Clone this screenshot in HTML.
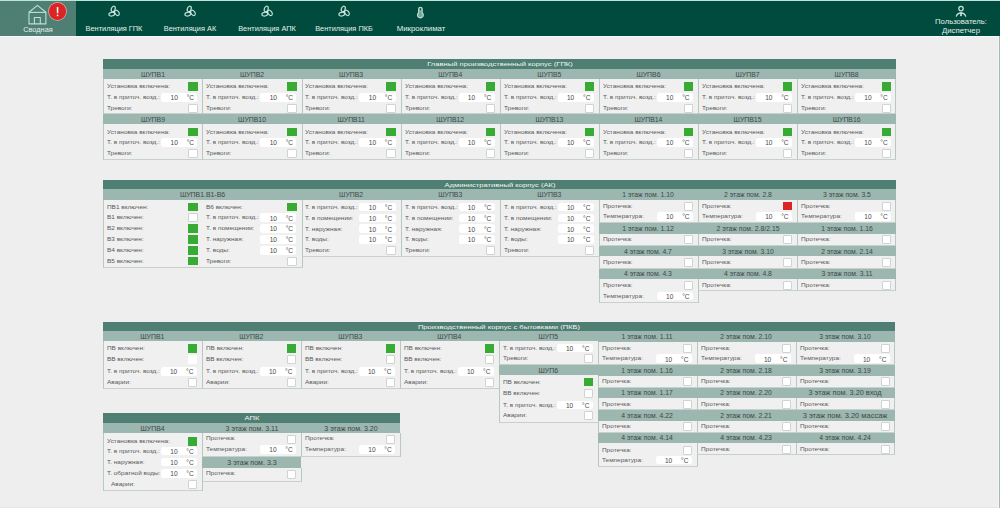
<!DOCTYPE html>
<html><head><meta charset="utf-8"><style>
html,body{margin:0;padding:0;}
body{width:1000px;height:508px;overflow:hidden;background:#eeeeee;position:relative;font-family:"Liberation Sans", sans-serif;}
body>div,body>svg{position:absolute;}
.t{white-space:nowrap;}
</style></head><body>
<div style="left:0.00px;top:0.00px;width:1000.00px;height:36.00px;background:#014b3e;"></div>
<div style="left:0.00px;top:0.00px;width:1000.00px;height:1.00px;background:#bfe3d8;"></div>
<div style="left:0.00px;top:1.00px;width:76.00px;height:35.00px;background:#4f7f73;"></div>
<div style="left:0.00px;top:36.00px;width:1000.00px;height:1.00px;background:#f8faf9;"></div>
<div style="left:998.00px;top:37.00px;width:1.00px;height:471.00px;background:#f5f7f6;"></div>
<div style="left:999.00px;top:36.00px;width:1.00px;height:472.00px;background:#a9b7b3;"></div>
<div style="left:0.00px;top:507.00px;width:998.00px;height:1.00px;background:#e6e7e6;"></div>
<svg style="left:0;top:0" width="80" height="36" viewBox="0 0 80 36">
<g fill="none" stroke="#bfe0d6" stroke-width="1.1" stroke-linejoin="round">
<path d="M29 12.2 L37.4 5.4 L45.9 12.2 L45.9 23.9 L29 23.9 Z"/>
<path d="M29 12.4 L45.9 12.4"/>
<path d="M34.4 23.9 L34.4 17.5 L40.3 17.5 L40.3 23.9"/>
</g>
<circle cx="57.5" cy="11.4" r="9.3" fill="#e4b0ac"/>
<circle cx="57.5" cy="11.4" r="8.6" fill="#d92525"/>
<rect x="56.8" y="6.9" width="1.5" height="6.4" rx="0.6" fill="#fff"/>
<rect x="56.8" y="14.6" width="1.5" height="1.6" rx="0.5" fill="#fff"/>
</svg>
<div class="t" style="left:-112.40px;top:26.18px;width:300px;text-align:center;font-size:6.7px;line-height:8.04px;color:#e4efeb;transform:scaleX(1.1);">Сводная</div>
<svg style="left:106.00px;top:4.30px" width="16" height="16" viewBox="-8 -8 16 16"><g fill="none" stroke="#bfe0d6" stroke-width="1.2"><ellipse cx="0" cy="0" rx="2.9" ry="1.85" transform="rotate(-104) translate(3.1,0) rotate(35)"/><ellipse cx="0" cy="0" rx="2.9" ry="1.85" transform="rotate(16) translate(3.1,0) rotate(35)"/><ellipse cx="0" cy="0" rx="2.9" ry="1.85" transform="rotate(136) translate(3.1,0) rotate(35)"/></g><circle cx="0" cy="0" r="0.8" fill="#dff" /></svg>
<div class="t" style="left:-36.00px;top:25.38px;width:300px;text-align:center;font-size:6.7px;line-height:8.04px;color:#e4efeb;transform:scaleX(1.1);">Вентиляция ГПК</div>
<svg style="left:182.40px;top:4.30px" width="16" height="16" viewBox="-8 -8 16 16"><g fill="none" stroke="#bfe0d6" stroke-width="1.2"><ellipse cx="0" cy="0" rx="2.9" ry="1.85" transform="rotate(-104) translate(3.1,0) rotate(35)"/><ellipse cx="0" cy="0" rx="2.9" ry="1.85" transform="rotate(16) translate(3.1,0) rotate(35)"/><ellipse cx="0" cy="0" rx="2.9" ry="1.85" transform="rotate(136) translate(3.1,0) rotate(35)"/></g><circle cx="0" cy="0" r="0.8" fill="#dff" /></svg>
<div class="t" style="left:40.40px;top:25.38px;width:300px;text-align:center;font-size:6.7px;line-height:8.04px;color:#e4efeb;transform:scaleX(1.1);">Вентиляция АК</div>
<svg style="left:259.30px;top:4.30px" width="16" height="16" viewBox="-8 -8 16 16"><g fill="none" stroke="#bfe0d6" stroke-width="1.2"><ellipse cx="0" cy="0" rx="2.9" ry="1.85" transform="rotate(-104) translate(3.1,0) rotate(35)"/><ellipse cx="0" cy="0" rx="2.9" ry="1.85" transform="rotate(16) translate(3.1,0) rotate(35)"/><ellipse cx="0" cy="0" rx="2.9" ry="1.85" transform="rotate(136) translate(3.1,0) rotate(35)"/></g><circle cx="0" cy="0" r="0.8" fill="#dff" /></svg>
<div class="t" style="left:117.30px;top:25.38px;width:300px;text-align:center;font-size:6.7px;line-height:8.04px;color:#e4efeb;transform:scaleX(1.1);">Вентиляция АПК</div>
<svg style="left:336.00px;top:4.30px" width="16" height="16" viewBox="-8 -8 16 16"><g fill="none" stroke="#bfe0d6" stroke-width="1.2"><ellipse cx="0" cy="0" rx="2.9" ry="1.85" transform="rotate(-104) translate(3.1,0) rotate(35)"/><ellipse cx="0" cy="0" rx="2.9" ry="1.85" transform="rotate(16) translate(3.1,0) rotate(35)"/><ellipse cx="0" cy="0" rx="2.9" ry="1.85" transform="rotate(136) translate(3.1,0) rotate(35)"/></g><circle cx="0" cy="0" r="0.8" fill="#dff" /></svg>
<div class="t" style="left:194.00px;top:25.38px;width:300px;text-align:center;font-size:6.7px;line-height:8.04px;color:#e4efeb;transform:scaleX(1.1);">Вентиляция ПКБ</div>
<svg style="left:410px;top:2px" width="20" height="20" viewBox="0 0 20 20">
<path d="M8.65 10.7 L8.65 6.95 A1.75 1.75 0 0 1 12.15 6.95 L12.15 10.7 A2.9 2.9 0 1 1 8.65 10.7 Z" fill="#74a898" stroke="#bfe0d6" stroke-width="1.1"/>
<ellipse cx="10.4" cy="7.2" rx="0.7" ry="1.05" fill="#0d4a3e"/>
</svg>
<div class="t" style="left:270.50px;top:25.38px;width:300px;text-align:center;font-size:6.7px;line-height:8.04px;color:#e4efeb;transform:scaleX(1.17);">Микроклимат</div>
<svg style="left:950px;top:2px" width="22" height="18" viewBox="0 0 22 18">
<g fill="none" stroke="#bfe0d6" stroke-width="1.3">
<circle cx="11" cy="6.6" r="2.2"/>
<path d="M6.2 14.6 A5 5 0 0 1 15.8 14.6"/>
</g>
<path d="M10.3 10 L11.7 10 L11.9 13.6 L11 14.6 L10.1 13.6 Z" fill="#bfe0d6"/>
</svg>
<div class="t" style="left:811.20px;top:18.18px;width:300px;text-align:center;font-size:6.7px;line-height:8.04px;color:#e4efeb;transform:scaleX(1.145);">Пользователь:</div>
<div class="t" style="left:810.80px;top:26.78px;width:300px;text-align:center;font-size:6.7px;line-height:8.04px;color:#e4efeb;transform:scaleX(1.16);">Диспетчер</div>
<div style="left:103.00px;top:59.00px;width:793.00px;height:10.00px;background:#4f7e72;"></div>
<div class="t" style="left:349.80px;top:60.38px;width:300px;text-align:center;font-size:6.2px;line-height:7.44px;color:#f2f7f5;transform:scaleX(1.23);">Главный производственный корпус (ГПК)</div>
<div style="left:103.00px;top:69.00px;width:99.00px;height:10.00px;background:#9cb6b0;"></div>
<div class="t" style="left:2.95px;top:71.31px;width:300px;text-align:center;font-size:6.9px;line-height:8.28px;color:#3e4846;">ШУПВ1</div>
<div style="left:103.00px;top:79.00px;width:101.00px;height:35.00px;background:#f0f0f0;box-sizing:border-box;border:1px solid #b7c7c2;border-bottom-color:#c6d1ce;border-top:none;"></div>
<div class="t" style="left:107.20px;top:83.32px;transform-origin:0 50%;font-size:5.8px;line-height:6.96px;color:#595959;transform:scaleX(1.11);">Установка включена:</div>
<div style="left:188.20px;top:82.30px;width:9.50px;height:8.50px;background:#38ab34;"></div>
<div class="t" style="left:107.20px;top:94.02px;transform-origin:0 50%;font-size:5.8px;line-height:6.96px;color:#595959;transform:scaleX(1.11);">Т. в приточ. возд.:</div>
<div style="left:161.20px;top:92.90px;width:36.20px;height:8.70px;background:#ffffff;border-radius:2.5px;"></div>
<div class="t" style="left:24.20px;top:94.16px;width:300px;text-align:center;font-size:6.56px;line-height:7.87px;color:#4a4a4a;">10</div>
<div class="t" style="left:-106.00px;top:94.16px;width:300px;text-align:right;transform-origin:100% 50%;font-size:6.56px;line-height:7.87px;color:#4a4a4a;">°C</div>
<div class="t" style="left:107.20px;top:104.72px;transform-origin:0 50%;font-size:5.8px;line-height:6.96px;color:#595959;transform:scaleX(1.11);">Тревоги:</div>
<div style="left:188.20px;top:103.70px;width:9.50px;height:9.00px;background:#ffffff;box-sizing:border-box;border:1px solid #cfd3d2;border-radius:1px;"></div>
<div style="left:202.00px;top:69.00px;width:100.00px;height:10.00px;background:#9cb6b0;"></div>
<div class="t" style="left:102.05px;top:71.31px;width:300px;text-align:center;font-size:6.9px;line-height:8.28px;color:#3e4846;">ШУПВ2</div>
<div style="left:202.00px;top:79.00px;width:101.00px;height:35.00px;background:#f0f0f0;box-sizing:border-box;border:1px solid #b7c7c2;border-bottom-color:#c6d1ce;border-top:none;"></div>
<div class="t" style="left:206.30px;top:83.32px;transform-origin:0 50%;font-size:5.8px;line-height:6.96px;color:#595959;transform:scaleX(1.11);">Установка включена:</div>
<div style="left:287.30px;top:82.30px;width:9.50px;height:8.50px;background:#38ab34;"></div>
<div class="t" style="left:206.30px;top:94.02px;transform-origin:0 50%;font-size:5.8px;line-height:6.96px;color:#595959;transform:scaleX(1.11);">Т. в приточ. возд.:</div>
<div style="left:260.30px;top:92.90px;width:36.20px;height:8.70px;background:#ffffff;border-radius:2.5px;"></div>
<div class="t" style="left:123.30px;top:94.16px;width:300px;text-align:center;font-size:6.56px;line-height:7.87px;color:#4a4a4a;">10</div>
<div class="t" style="left:-6.90px;top:94.16px;width:300px;text-align:right;transform-origin:100% 50%;font-size:6.56px;line-height:7.87px;color:#4a4a4a;">°C</div>
<div class="t" style="left:206.30px;top:104.72px;transform-origin:0 50%;font-size:5.8px;line-height:6.96px;color:#595959;transform:scaleX(1.11);">Тревоги:</div>
<div style="left:287.30px;top:103.70px;width:9.50px;height:9.00px;background:#ffffff;box-sizing:border-box;border:1px solid #cfd3d2;border-radius:1px;"></div>
<div style="left:302.00px;top:69.00px;width:99.00px;height:10.00px;background:#9cb6b0;"></div>
<div class="t" style="left:201.15px;top:71.31px;width:300px;text-align:center;font-size:6.9px;line-height:8.28px;color:#3e4846;">ШУПВ3</div>
<div style="left:302.00px;top:79.00px;width:100.00px;height:35.00px;background:#f0f0f0;box-sizing:border-box;border:1px solid #b7c7c2;border-bottom-color:#c6d1ce;border-top:none;"></div>
<div class="t" style="left:305.40px;top:83.32px;transform-origin:0 50%;font-size:5.8px;line-height:6.96px;color:#595959;transform:scaleX(1.11);">Установка включена:</div>
<div style="left:386.40px;top:82.30px;width:9.50px;height:8.50px;background:#38ab34;"></div>
<div class="t" style="left:305.40px;top:94.02px;transform-origin:0 50%;font-size:5.8px;line-height:6.96px;color:#595959;transform:scaleX(1.11);">Т. в приточ. возд.:</div>
<div style="left:359.40px;top:92.90px;width:36.20px;height:8.70px;background:#ffffff;border-radius:2.5px;"></div>
<div class="t" style="left:222.40px;top:94.16px;width:300px;text-align:center;font-size:6.56px;line-height:7.87px;color:#4a4a4a;">10</div>
<div class="t" style="left:92.20px;top:94.16px;width:300px;text-align:right;transform-origin:100% 50%;font-size:6.56px;line-height:7.87px;color:#4a4a4a;">°C</div>
<div class="t" style="left:305.40px;top:104.72px;transform-origin:0 50%;font-size:5.8px;line-height:6.96px;color:#595959;transform:scaleX(1.11);">Тревоги:</div>
<div style="left:386.40px;top:103.70px;width:9.50px;height:9.00px;background:#ffffff;box-sizing:border-box;border:1px solid #cfd3d2;border-radius:1px;"></div>
<div style="left:401.00px;top:69.00px;width:99.00px;height:10.00px;background:#9cb6b0;"></div>
<div class="t" style="left:300.25px;top:71.31px;width:300px;text-align:center;font-size:6.9px;line-height:8.28px;color:#3e4846;">ШУПВ4</div>
<div style="left:401.00px;top:79.00px;width:100.00px;height:35.00px;background:#f0f0f0;box-sizing:border-box;border:1px solid #b7c7c2;border-bottom-color:#c6d1ce;border-top:none;"></div>
<div class="t" style="left:404.50px;top:83.32px;transform-origin:0 50%;font-size:5.8px;line-height:6.96px;color:#595959;transform:scaleX(1.11);">Установка включена:</div>
<div style="left:485.50px;top:82.30px;width:9.50px;height:8.50px;background:#38ab34;"></div>
<div class="t" style="left:404.50px;top:94.02px;transform-origin:0 50%;font-size:5.8px;line-height:6.96px;color:#595959;transform:scaleX(1.11);">Т. в приточ. возд.:</div>
<div style="left:458.50px;top:92.90px;width:36.20px;height:8.70px;background:#ffffff;border-radius:2.5px;"></div>
<div class="t" style="left:321.50px;top:94.16px;width:300px;text-align:center;font-size:6.56px;line-height:7.87px;color:#4a4a4a;">10</div>
<div class="t" style="left:191.30px;top:94.16px;width:300px;text-align:right;transform-origin:100% 50%;font-size:6.56px;line-height:7.87px;color:#4a4a4a;">°C</div>
<div class="t" style="left:404.50px;top:104.72px;transform-origin:0 50%;font-size:5.8px;line-height:6.96px;color:#595959;transform:scaleX(1.11);">Тревоги:</div>
<div style="left:485.50px;top:103.70px;width:9.50px;height:9.00px;background:#ffffff;box-sizing:border-box;border:1px solid #cfd3d2;border-radius:1px;"></div>
<div style="left:500.00px;top:69.00px;width:99.00px;height:10.00px;background:#9cb6b0;"></div>
<div class="t" style="left:399.35px;top:71.31px;width:300px;text-align:center;font-size:6.9px;line-height:8.28px;color:#3e4846;">ШУПВ5</div>
<div style="left:500.00px;top:79.00px;width:100.00px;height:35.00px;background:#f0f0f0;box-sizing:border-box;border:1px solid #b7c7c2;border-bottom-color:#c6d1ce;border-top:none;"></div>
<div class="t" style="left:503.60px;top:83.32px;transform-origin:0 50%;font-size:5.8px;line-height:6.96px;color:#595959;transform:scaleX(1.11);">Установка включена:</div>
<div style="left:584.60px;top:82.30px;width:9.50px;height:8.50px;background:#38ab34;"></div>
<div class="t" style="left:503.60px;top:94.02px;transform-origin:0 50%;font-size:5.8px;line-height:6.96px;color:#595959;transform:scaleX(1.11);">Т. в приточ. возд.:</div>
<div style="left:557.60px;top:92.90px;width:36.20px;height:8.70px;background:#ffffff;border-radius:2.5px;"></div>
<div class="t" style="left:420.60px;top:94.16px;width:300px;text-align:center;font-size:6.56px;line-height:7.87px;color:#4a4a4a;">10</div>
<div class="t" style="left:290.40px;top:94.16px;width:300px;text-align:right;transform-origin:100% 50%;font-size:6.56px;line-height:7.87px;color:#4a4a4a;">°C</div>
<div class="t" style="left:503.60px;top:104.72px;transform-origin:0 50%;font-size:5.8px;line-height:6.96px;color:#595959;transform:scaleX(1.11);">Тревоги:</div>
<div style="left:584.60px;top:103.70px;width:9.50px;height:9.00px;background:#ffffff;box-sizing:border-box;border:1px solid #cfd3d2;border-radius:1px;"></div>
<div style="left:599.00px;top:69.00px;width:99.00px;height:10.00px;background:#9cb6b0;"></div>
<div class="t" style="left:498.45px;top:71.31px;width:300px;text-align:center;font-size:6.9px;line-height:8.28px;color:#3e4846;">ШУПВ6</div>
<div style="left:599.00px;top:79.00px;width:100.00px;height:35.00px;background:#f0f0f0;box-sizing:border-box;border:1px solid #b7c7c2;border-bottom-color:#c6d1ce;border-top:none;"></div>
<div class="t" style="left:602.70px;top:83.32px;transform-origin:0 50%;font-size:5.8px;line-height:6.96px;color:#595959;transform:scaleX(1.11);">Установка включена:</div>
<div style="left:683.70px;top:82.30px;width:9.50px;height:8.50px;background:#38ab34;"></div>
<div class="t" style="left:602.70px;top:94.02px;transform-origin:0 50%;font-size:5.8px;line-height:6.96px;color:#595959;transform:scaleX(1.11);">Т. в приточ. возд.:</div>
<div style="left:656.70px;top:92.90px;width:36.20px;height:8.70px;background:#ffffff;border-radius:2.5px;"></div>
<div class="t" style="left:519.70px;top:94.16px;width:300px;text-align:center;font-size:6.56px;line-height:7.87px;color:#4a4a4a;">10</div>
<div class="t" style="left:389.50px;top:94.16px;width:300px;text-align:right;transform-origin:100% 50%;font-size:6.56px;line-height:7.87px;color:#4a4a4a;">°C</div>
<div class="t" style="left:602.70px;top:104.72px;transform-origin:0 50%;font-size:5.8px;line-height:6.96px;color:#595959;transform:scaleX(1.11);">Тревоги:</div>
<div style="left:683.70px;top:103.70px;width:9.50px;height:9.00px;background:#ffffff;box-sizing:border-box;border:1px solid #cfd3d2;border-radius:1px;"></div>
<div style="left:698.00px;top:69.00px;width:99.00px;height:10.00px;background:#9cb6b0;"></div>
<div class="t" style="left:597.55px;top:71.31px;width:300px;text-align:center;font-size:6.9px;line-height:8.28px;color:#3e4846;">ШУПВ7</div>
<div style="left:698.00px;top:79.00px;width:100.00px;height:35.00px;background:#f0f0f0;box-sizing:border-box;border:1px solid #b7c7c2;border-bottom-color:#c6d1ce;border-top:none;"></div>
<div class="t" style="left:701.80px;top:83.32px;transform-origin:0 50%;font-size:5.8px;line-height:6.96px;color:#595959;transform:scaleX(1.11);">Установка включена:</div>
<div style="left:782.80px;top:82.30px;width:9.50px;height:8.50px;background:#38ab34;"></div>
<div class="t" style="left:701.80px;top:94.02px;transform-origin:0 50%;font-size:5.8px;line-height:6.96px;color:#595959;transform:scaleX(1.11);">Т. в приточ. возд.:</div>
<div style="left:755.80px;top:92.90px;width:36.20px;height:8.70px;background:#ffffff;border-radius:2.5px;"></div>
<div class="t" style="left:618.80px;top:94.16px;width:300px;text-align:center;font-size:6.56px;line-height:7.87px;color:#4a4a4a;">10</div>
<div class="t" style="left:488.60px;top:94.16px;width:300px;text-align:right;transform-origin:100% 50%;font-size:6.56px;line-height:7.87px;color:#4a4a4a;">°C</div>
<div class="t" style="left:701.80px;top:104.72px;transform-origin:0 50%;font-size:5.8px;line-height:6.96px;color:#595959;transform:scaleX(1.11);">Тревоги:</div>
<div style="left:782.80px;top:103.70px;width:9.50px;height:9.00px;background:#ffffff;box-sizing:border-box;border:1px solid #cfd3d2;border-radius:1px;"></div>
<div style="left:797.00px;top:69.00px;width:99.00px;height:10.00px;background:#9cb6b0;"></div>
<div class="t" style="left:696.65px;top:71.31px;width:300px;text-align:center;font-size:6.9px;line-height:8.28px;color:#3e4846;">ШУПВ8</div>
<div style="left:797.00px;top:79.00px;width:99.00px;height:35.00px;background:#f0f0f0;box-sizing:border-box;border:1px solid #b7c7c2;border-bottom-color:#c6d1ce;border-top:none;"></div>
<div class="t" style="left:800.90px;top:83.32px;transform-origin:0 50%;font-size:5.8px;line-height:6.96px;color:#595959;transform:scaleX(1.11);">Установка включена:</div>
<div style="left:881.90px;top:82.30px;width:9.50px;height:8.50px;background:#38ab34;"></div>
<div class="t" style="left:800.90px;top:94.02px;transform-origin:0 50%;font-size:5.8px;line-height:6.96px;color:#595959;transform:scaleX(1.11);">Т. в приточ. возд.:</div>
<div style="left:854.90px;top:92.90px;width:36.20px;height:8.70px;background:#ffffff;border-radius:2.5px;"></div>
<div class="t" style="left:717.90px;top:94.16px;width:300px;text-align:center;font-size:6.56px;line-height:7.87px;color:#4a4a4a;">10</div>
<div class="t" style="left:587.70px;top:94.16px;width:300px;text-align:right;transform-origin:100% 50%;font-size:6.56px;line-height:7.87px;color:#4a4a4a;">°C</div>
<div class="t" style="left:800.90px;top:104.72px;transform-origin:0 50%;font-size:5.8px;line-height:6.96px;color:#595959;transform:scaleX(1.11);">Тревоги:</div>
<div style="left:881.90px;top:103.70px;width:9.50px;height:9.00px;background:#ffffff;box-sizing:border-box;border:1px solid #cfd3d2;border-radius:1px;"></div>
<div style="left:103.00px;top:114.00px;width:99.00px;height:10.00px;background:#9cb6b0;"></div>
<div class="t" style="left:2.95px;top:116.31px;width:300px;text-align:center;font-size:6.9px;line-height:8.28px;color:#3e4846;">ШУПВ9</div>
<div style="left:103.00px;top:124.00px;width:101.00px;height:36.00px;background:#f0f0f0;box-sizing:border-box;border:1px solid #b7c7c2;border-bottom-color:#c6d1ce;border-top:none;"></div>
<div class="t" style="left:107.20px;top:128.52px;transform-origin:0 50%;font-size:5.8px;line-height:6.96px;color:#595959;transform:scaleX(1.11);">Установка включена:</div>
<div style="left:188.20px;top:127.50px;width:9.50px;height:8.50px;background:#38ab34;"></div>
<div class="t" style="left:107.20px;top:139.22px;transform-origin:0 50%;font-size:5.8px;line-height:6.96px;color:#595959;transform:scaleX(1.11);">Т. в приточ. возд.:</div>
<div style="left:161.20px;top:138.10px;width:36.20px;height:8.70px;background:#ffffff;border-radius:2.5px;"></div>
<div class="t" style="left:24.20px;top:139.36px;width:300px;text-align:center;font-size:6.56px;line-height:7.87px;color:#4a4a4a;">10</div>
<div class="t" style="left:-106.00px;top:139.36px;width:300px;text-align:right;transform-origin:100% 50%;font-size:6.56px;line-height:7.87px;color:#4a4a4a;">°C</div>
<div class="t" style="left:107.20px;top:149.92px;transform-origin:0 50%;font-size:5.8px;line-height:6.96px;color:#595959;transform:scaleX(1.11);">Тревоги:</div>
<div style="left:188.20px;top:148.90px;width:9.50px;height:9.00px;background:#ffffff;box-sizing:border-box;border:1px solid #cfd3d2;border-radius:1px;"></div>
<div style="left:202.00px;top:114.00px;width:100.00px;height:10.00px;background:#9cb6b0;"></div>
<div class="t" style="left:102.05px;top:116.31px;width:300px;text-align:center;font-size:6.9px;line-height:8.28px;color:#3e4846;">ШУПВ10</div>
<div style="left:202.00px;top:124.00px;width:101.00px;height:36.00px;background:#f0f0f0;box-sizing:border-box;border:1px solid #b7c7c2;border-bottom-color:#c6d1ce;border-top:none;"></div>
<div class="t" style="left:206.30px;top:128.52px;transform-origin:0 50%;font-size:5.8px;line-height:6.96px;color:#595959;transform:scaleX(1.11);">Установка включена:</div>
<div style="left:287.30px;top:127.50px;width:9.50px;height:8.50px;background:#38ab34;"></div>
<div class="t" style="left:206.30px;top:139.22px;transform-origin:0 50%;font-size:5.8px;line-height:6.96px;color:#595959;transform:scaleX(1.11);">Т. в приточ. возд.:</div>
<div style="left:260.30px;top:138.10px;width:36.20px;height:8.70px;background:#ffffff;border-radius:2.5px;"></div>
<div class="t" style="left:123.30px;top:139.36px;width:300px;text-align:center;font-size:6.56px;line-height:7.87px;color:#4a4a4a;">10</div>
<div class="t" style="left:-6.90px;top:139.36px;width:300px;text-align:right;transform-origin:100% 50%;font-size:6.56px;line-height:7.87px;color:#4a4a4a;">°C</div>
<div class="t" style="left:206.30px;top:149.92px;transform-origin:0 50%;font-size:5.8px;line-height:6.96px;color:#595959;transform:scaleX(1.11);">Тревоги:</div>
<div style="left:287.30px;top:148.90px;width:9.50px;height:9.00px;background:#ffffff;box-sizing:border-box;border:1px solid #cfd3d2;border-radius:1px;"></div>
<div style="left:302.00px;top:114.00px;width:99.00px;height:10.00px;background:#9cb6b0;"></div>
<div class="t" style="left:201.15px;top:116.31px;width:300px;text-align:center;font-size:6.9px;line-height:8.28px;color:#3e4846;">ШУПВ11</div>
<div style="left:302.00px;top:124.00px;width:100.00px;height:36.00px;background:#f0f0f0;box-sizing:border-box;border:1px solid #b7c7c2;border-bottom-color:#c6d1ce;border-top:none;"></div>
<div class="t" style="left:305.40px;top:128.52px;transform-origin:0 50%;font-size:5.8px;line-height:6.96px;color:#595959;transform:scaleX(1.11);">Установка включена:</div>
<div style="left:386.40px;top:127.50px;width:9.50px;height:8.50px;background:#38ab34;"></div>
<div class="t" style="left:305.40px;top:139.22px;transform-origin:0 50%;font-size:5.8px;line-height:6.96px;color:#595959;transform:scaleX(1.11);">Т. в приточ. возд.:</div>
<div style="left:359.40px;top:138.10px;width:36.20px;height:8.70px;background:#ffffff;border-radius:2.5px;"></div>
<div class="t" style="left:222.40px;top:139.36px;width:300px;text-align:center;font-size:6.56px;line-height:7.87px;color:#4a4a4a;">10</div>
<div class="t" style="left:92.20px;top:139.36px;width:300px;text-align:right;transform-origin:100% 50%;font-size:6.56px;line-height:7.87px;color:#4a4a4a;">°C</div>
<div class="t" style="left:305.40px;top:149.92px;transform-origin:0 50%;font-size:5.8px;line-height:6.96px;color:#595959;transform:scaleX(1.11);">Тревоги:</div>
<div style="left:386.40px;top:148.90px;width:9.50px;height:9.00px;background:#ffffff;box-sizing:border-box;border:1px solid #cfd3d2;border-radius:1px;"></div>
<div style="left:401.00px;top:114.00px;width:99.00px;height:10.00px;background:#9cb6b0;"></div>
<div class="t" style="left:300.25px;top:116.31px;width:300px;text-align:center;font-size:6.9px;line-height:8.28px;color:#3e4846;">ШУПВ12</div>
<div style="left:401.00px;top:124.00px;width:100.00px;height:36.00px;background:#f0f0f0;box-sizing:border-box;border:1px solid #b7c7c2;border-bottom-color:#c6d1ce;border-top:none;"></div>
<div class="t" style="left:404.50px;top:128.52px;transform-origin:0 50%;font-size:5.8px;line-height:6.96px;color:#595959;transform:scaleX(1.11);">Установка включена:</div>
<div style="left:485.50px;top:127.50px;width:9.50px;height:8.50px;background:#38ab34;"></div>
<div class="t" style="left:404.50px;top:139.22px;transform-origin:0 50%;font-size:5.8px;line-height:6.96px;color:#595959;transform:scaleX(1.11);">Т. в приточ. возд.:</div>
<div style="left:458.50px;top:138.10px;width:36.20px;height:8.70px;background:#ffffff;border-radius:2.5px;"></div>
<div class="t" style="left:321.50px;top:139.36px;width:300px;text-align:center;font-size:6.56px;line-height:7.87px;color:#4a4a4a;">10</div>
<div class="t" style="left:191.30px;top:139.36px;width:300px;text-align:right;transform-origin:100% 50%;font-size:6.56px;line-height:7.87px;color:#4a4a4a;">°C</div>
<div class="t" style="left:404.50px;top:149.92px;transform-origin:0 50%;font-size:5.8px;line-height:6.96px;color:#595959;transform:scaleX(1.11);">Тревоги:</div>
<div style="left:485.50px;top:148.90px;width:9.50px;height:9.00px;background:#ffffff;box-sizing:border-box;border:1px solid #cfd3d2;border-radius:1px;"></div>
<div style="left:500.00px;top:114.00px;width:99.00px;height:10.00px;background:#9cb6b0;"></div>
<div class="t" style="left:399.35px;top:116.31px;width:300px;text-align:center;font-size:6.9px;line-height:8.28px;color:#3e4846;">ШУПВ13</div>
<div style="left:500.00px;top:124.00px;width:100.00px;height:36.00px;background:#f0f0f0;box-sizing:border-box;border:1px solid #b7c7c2;border-bottom-color:#c6d1ce;border-top:none;"></div>
<div class="t" style="left:503.60px;top:128.52px;transform-origin:0 50%;font-size:5.8px;line-height:6.96px;color:#595959;transform:scaleX(1.11);">Установка включена:</div>
<div style="left:584.60px;top:127.50px;width:9.50px;height:8.50px;background:#38ab34;"></div>
<div class="t" style="left:503.60px;top:139.22px;transform-origin:0 50%;font-size:5.8px;line-height:6.96px;color:#595959;transform:scaleX(1.11);">Т. в приточ. возд.:</div>
<div style="left:557.60px;top:138.10px;width:36.20px;height:8.70px;background:#ffffff;border-radius:2.5px;"></div>
<div class="t" style="left:420.60px;top:139.36px;width:300px;text-align:center;font-size:6.56px;line-height:7.87px;color:#4a4a4a;">10</div>
<div class="t" style="left:290.40px;top:139.36px;width:300px;text-align:right;transform-origin:100% 50%;font-size:6.56px;line-height:7.87px;color:#4a4a4a;">°C</div>
<div class="t" style="left:503.60px;top:149.92px;transform-origin:0 50%;font-size:5.8px;line-height:6.96px;color:#595959;transform:scaleX(1.11);">Тревоги:</div>
<div style="left:584.60px;top:148.90px;width:9.50px;height:9.00px;background:#ffffff;box-sizing:border-box;border:1px solid #cfd3d2;border-radius:1px;"></div>
<div style="left:599.00px;top:114.00px;width:99.00px;height:10.00px;background:#9cb6b0;"></div>
<div class="t" style="left:498.45px;top:116.31px;width:300px;text-align:center;font-size:6.9px;line-height:8.28px;color:#3e4846;">ШУПВ14</div>
<div style="left:599.00px;top:124.00px;width:100.00px;height:36.00px;background:#f0f0f0;box-sizing:border-box;border:1px solid #b7c7c2;border-bottom-color:#c6d1ce;border-top:none;"></div>
<div class="t" style="left:602.70px;top:128.52px;transform-origin:0 50%;font-size:5.8px;line-height:6.96px;color:#595959;transform:scaleX(1.11);">Установка включена:</div>
<div style="left:683.70px;top:127.50px;width:9.50px;height:8.50px;background:#38ab34;"></div>
<div class="t" style="left:602.70px;top:139.22px;transform-origin:0 50%;font-size:5.8px;line-height:6.96px;color:#595959;transform:scaleX(1.11);">Т. в приточ. возд.:</div>
<div style="left:656.70px;top:138.10px;width:36.20px;height:8.70px;background:#ffffff;border-radius:2.5px;"></div>
<div class="t" style="left:519.70px;top:139.36px;width:300px;text-align:center;font-size:6.56px;line-height:7.87px;color:#4a4a4a;">10</div>
<div class="t" style="left:389.50px;top:139.36px;width:300px;text-align:right;transform-origin:100% 50%;font-size:6.56px;line-height:7.87px;color:#4a4a4a;">°C</div>
<div class="t" style="left:602.70px;top:149.92px;transform-origin:0 50%;font-size:5.8px;line-height:6.96px;color:#595959;transform:scaleX(1.11);">Тревоги:</div>
<div style="left:683.70px;top:148.90px;width:9.50px;height:9.00px;background:#ffffff;box-sizing:border-box;border:1px solid #cfd3d2;border-radius:1px;"></div>
<div style="left:698.00px;top:114.00px;width:99.00px;height:10.00px;background:#9cb6b0;"></div>
<div class="t" style="left:597.55px;top:116.31px;width:300px;text-align:center;font-size:6.9px;line-height:8.28px;color:#3e4846;">ШУПВ15</div>
<div style="left:698.00px;top:124.00px;width:100.00px;height:36.00px;background:#f0f0f0;box-sizing:border-box;border:1px solid #b7c7c2;border-bottom-color:#c6d1ce;border-top:none;"></div>
<div class="t" style="left:701.80px;top:128.52px;transform-origin:0 50%;font-size:5.8px;line-height:6.96px;color:#595959;transform:scaleX(1.11);">Установка включена:</div>
<div style="left:782.80px;top:127.50px;width:9.50px;height:8.50px;background:#38ab34;"></div>
<div class="t" style="left:701.80px;top:139.22px;transform-origin:0 50%;font-size:5.8px;line-height:6.96px;color:#595959;transform:scaleX(1.11);">Т. в приточ. возд.:</div>
<div style="left:755.80px;top:138.10px;width:36.20px;height:8.70px;background:#ffffff;border-radius:2.5px;"></div>
<div class="t" style="left:618.80px;top:139.36px;width:300px;text-align:center;font-size:6.56px;line-height:7.87px;color:#4a4a4a;">10</div>
<div class="t" style="left:488.60px;top:139.36px;width:300px;text-align:right;transform-origin:100% 50%;font-size:6.56px;line-height:7.87px;color:#4a4a4a;">°C</div>
<div class="t" style="left:701.80px;top:149.92px;transform-origin:0 50%;font-size:5.8px;line-height:6.96px;color:#595959;transform:scaleX(1.11);">Тревоги:</div>
<div style="left:782.80px;top:148.90px;width:9.50px;height:9.00px;background:#ffffff;box-sizing:border-box;border:1px solid #cfd3d2;border-radius:1px;"></div>
<div style="left:797.00px;top:114.00px;width:99.00px;height:10.00px;background:#9cb6b0;"></div>
<div class="t" style="left:696.65px;top:116.31px;width:300px;text-align:center;font-size:6.9px;line-height:8.28px;color:#3e4846;">ШУПВ16</div>
<div style="left:797.00px;top:124.00px;width:99.00px;height:36.00px;background:#f0f0f0;box-sizing:border-box;border:1px solid #b7c7c2;border-bottom-color:#c6d1ce;border-top:none;"></div>
<div class="t" style="left:800.90px;top:128.52px;transform-origin:0 50%;font-size:5.8px;line-height:6.96px;color:#595959;transform:scaleX(1.11);">Установка включена:</div>
<div style="left:881.90px;top:127.50px;width:9.50px;height:8.50px;background:#38ab34;"></div>
<div class="t" style="left:800.90px;top:139.22px;transform-origin:0 50%;font-size:5.8px;line-height:6.96px;color:#595959;transform:scaleX(1.11);">Т. в приточ. возд.:</div>
<div style="left:854.90px;top:138.10px;width:36.20px;height:8.70px;background:#ffffff;border-radius:2.5px;"></div>
<div class="t" style="left:717.90px;top:139.36px;width:300px;text-align:center;font-size:6.56px;line-height:7.87px;color:#4a4a4a;">10</div>
<div class="t" style="left:587.70px;top:139.36px;width:300px;text-align:right;transform-origin:100% 50%;font-size:6.56px;line-height:7.87px;color:#4a4a4a;">°C</div>
<div class="t" style="left:800.90px;top:149.92px;transform-origin:0 50%;font-size:5.8px;line-height:6.96px;color:#595959;transform:scaleX(1.11);">Тревоги:</div>
<div style="left:881.90px;top:148.90px;width:9.50px;height:9.00px;background:#ffffff;box-sizing:border-box;border:1px solid #cfd3d2;border-radius:1px;"></div>
<div style="left:103.00px;top:180.00px;width:793.00px;height:9.00px;background:#4f7e72;"></div>
<div class="t" style="left:349.80px;top:180.58px;width:300px;text-align:center;font-size:6.2px;line-height:7.44px;color:#f2f7f5;transform:scaleX(1.23);">Административный корпус (АК)</div>
<div style="left:103.00px;top:189.00px;width:199.00px;height:11.00px;background:#9cb6b0;"></div>
<div class="t" style="left:52.50px;top:191.36px;width:300px;text-align:center;font-size:6.9px;line-height:8.28px;color:#3e4846;">ШУПВ1.В1-В6</div>
<div style="left:103.00px;top:200.00px;width:200.00px;height:68.00px;background:#f0f0f0;box-sizing:border-box;border:1px solid #b7c7c2;border-bottom-color:#c6d1ce;border-top:none;"></div>
<div class="t" style="left:107.20px;top:203.62px;transform-origin:0 50%;font-size:5.8px;line-height:6.96px;color:#595959;transform:scaleX(1.11);">ПВ1 включен:</div>
<div style="left:188.20px;top:202.60px;width:9.50px;height:8.50px;background:#38ab34;"></div>
<div class="t" style="left:107.20px;top:214.47px;transform-origin:0 50%;font-size:5.8px;line-height:6.96px;color:#595959;transform:scaleX(1.11);">В1 включен:</div>
<div style="left:188.20px;top:213.45px;width:9.50px;height:9.00px;background:#ffffff;box-sizing:border-box;border:1px solid #cfd3d2;border-radius:1px;"></div>
<div class="t" style="left:107.20px;top:225.32px;transform-origin:0 50%;font-size:5.8px;line-height:6.96px;color:#595959;transform:scaleX(1.11);">В2 включен:</div>
<div style="left:188.20px;top:224.30px;width:9.50px;height:8.50px;background:#38ab34;"></div>
<div class="t" style="left:107.20px;top:236.17px;transform-origin:0 50%;font-size:5.8px;line-height:6.96px;color:#595959;transform:scaleX(1.11);">В3 включен:</div>
<div style="left:188.20px;top:235.15px;width:9.50px;height:8.50px;background:#38ab34;"></div>
<div class="t" style="left:107.20px;top:247.02px;transform-origin:0 50%;font-size:5.8px;line-height:6.96px;color:#595959;transform:scaleX(1.11);">В4 включен:</div>
<div style="left:188.20px;top:246.00px;width:9.50px;height:8.50px;background:#38ab34;"></div>
<div class="t" style="left:107.20px;top:257.87px;transform-origin:0 50%;font-size:5.8px;line-height:6.96px;color:#595959;transform:scaleX(1.11);">В5 включен:</div>
<div style="left:188.20px;top:256.85px;width:9.50px;height:8.50px;background:#38ab34;"></div>
<div class="t" style="left:206.30px;top:203.62px;transform-origin:0 50%;font-size:5.8px;line-height:6.96px;color:#595959;transform:scaleX(1.11);">В6 включен:</div>
<div style="left:287.30px;top:202.60px;width:9.50px;height:8.50px;background:#38ab34;"></div>
<div class="t" style="left:206.30px;top:214.47px;transform-origin:0 50%;font-size:5.8px;line-height:6.96px;color:#595959;transform:scaleX(1.11);">Т. в приточ. возд.:</div>
<div style="left:260.30px;top:213.35px;width:36.20px;height:8.70px;background:#ffffff;border-radius:2.5px;"></div>
<div class="t" style="left:123.30px;top:214.61px;width:300px;text-align:center;font-size:6.56px;line-height:7.87px;color:#4a4a4a;">10</div>
<div class="t" style="left:-6.90px;top:214.61px;width:300px;text-align:right;transform-origin:100% 50%;font-size:6.56px;line-height:7.87px;color:#4a4a4a;">°C</div>
<div class="t" style="left:206.30px;top:225.32px;transform-origin:0 50%;font-size:5.8px;line-height:6.96px;color:#595959;transform:scaleX(1.11);">Т. в помещении:</div>
<div style="left:260.30px;top:224.20px;width:36.20px;height:8.70px;background:#ffffff;border-radius:2.5px;"></div>
<div class="t" style="left:123.30px;top:225.46px;width:300px;text-align:center;font-size:6.56px;line-height:7.87px;color:#4a4a4a;">10</div>
<div class="t" style="left:-6.90px;top:225.46px;width:300px;text-align:right;transform-origin:100% 50%;font-size:6.56px;line-height:7.87px;color:#4a4a4a;">°C</div>
<div class="t" style="left:206.30px;top:236.17px;transform-origin:0 50%;font-size:5.8px;line-height:6.96px;color:#595959;transform:scaleX(1.11);">Т. наружная:</div>
<div style="left:260.30px;top:235.05px;width:36.20px;height:8.70px;background:#ffffff;border-radius:2.5px;"></div>
<div class="t" style="left:123.30px;top:236.31px;width:300px;text-align:center;font-size:6.56px;line-height:7.87px;color:#4a4a4a;">10</div>
<div class="t" style="left:-6.90px;top:236.31px;width:300px;text-align:right;transform-origin:100% 50%;font-size:6.56px;line-height:7.87px;color:#4a4a4a;">°C</div>
<div class="t" style="left:206.30px;top:247.02px;transform-origin:0 50%;font-size:5.8px;line-height:6.96px;color:#595959;transform:scaleX(1.11);">Т. воды:</div>
<div style="left:260.30px;top:245.90px;width:36.20px;height:8.70px;background:#ffffff;border-radius:2.5px;"></div>
<div class="t" style="left:123.30px;top:247.16px;width:300px;text-align:center;font-size:6.56px;line-height:7.87px;color:#4a4a4a;">10</div>
<div class="t" style="left:-6.90px;top:247.16px;width:300px;text-align:right;transform-origin:100% 50%;font-size:6.56px;line-height:7.87px;color:#4a4a4a;">°C</div>
<div class="t" style="left:206.30px;top:257.87px;transform-origin:0 50%;font-size:5.8px;line-height:6.96px;color:#595959;transform:scaleX(1.11);">Тревоги:</div>
<div style="left:287.30px;top:256.85px;width:9.50px;height:9.00px;background:#ffffff;box-sizing:border-box;border:1px solid #cfd3d2;border-radius:1px;"></div>
<div style="left:302.00px;top:189.00px;width:99.00px;height:11.00px;background:#9cb6b0;"></div>
<div class="t" style="left:201.15px;top:191.36px;width:300px;text-align:center;font-size:6.9px;line-height:8.28px;color:#3e4846;">ШУПВ2</div>
<div style="left:302.00px;top:200.00px;width:100.00px;height:57.00px;background:#f0f0f0;box-sizing:border-box;border:1px solid #b7c7c2;border-bottom-color:#c6d1ce;border-top:none;"></div>
<div class="t" style="left:305.40px;top:203.92px;transform-origin:0 50%;font-size:5.8px;line-height:6.96px;color:#595959;transform:scaleX(1.11);">Т. в приточ. возд.:</div>
<div style="left:359.40px;top:202.80px;width:36.20px;height:8.70px;background:#ffffff;border-radius:2.5px;"></div>
<div class="t" style="left:222.40px;top:204.06px;width:300px;text-align:center;font-size:6.56px;line-height:7.87px;color:#4a4a4a;">10</div>
<div class="t" style="left:92.20px;top:204.06px;width:300px;text-align:right;transform-origin:100% 50%;font-size:6.56px;line-height:7.87px;color:#4a4a4a;">°C</div>
<div class="t" style="left:305.40px;top:214.72px;transform-origin:0 50%;font-size:5.8px;line-height:6.96px;color:#595959;transform:scaleX(1.11);">Т. в помещении:</div>
<div style="left:359.40px;top:213.60px;width:36.20px;height:8.70px;background:#ffffff;border-radius:2.5px;"></div>
<div class="t" style="left:222.40px;top:214.86px;width:300px;text-align:center;font-size:6.56px;line-height:7.87px;color:#4a4a4a;">10</div>
<div class="t" style="left:92.20px;top:214.86px;width:300px;text-align:right;transform-origin:100% 50%;font-size:6.56px;line-height:7.87px;color:#4a4a4a;">°C</div>
<div class="t" style="left:305.40px;top:225.52px;transform-origin:0 50%;font-size:5.8px;line-height:6.96px;color:#595959;transform:scaleX(1.11);">Т. наружная:</div>
<div style="left:359.40px;top:224.40px;width:36.20px;height:8.70px;background:#ffffff;border-radius:2.5px;"></div>
<div class="t" style="left:222.40px;top:225.66px;width:300px;text-align:center;font-size:6.56px;line-height:7.87px;color:#4a4a4a;">10</div>
<div class="t" style="left:92.20px;top:225.66px;width:300px;text-align:right;transform-origin:100% 50%;font-size:6.56px;line-height:7.87px;color:#4a4a4a;">°C</div>
<div class="t" style="left:305.40px;top:236.32px;transform-origin:0 50%;font-size:5.8px;line-height:6.96px;color:#595959;transform:scaleX(1.11);">Т. воды:</div>
<div style="left:359.40px;top:235.20px;width:36.20px;height:8.70px;background:#ffffff;border-radius:2.5px;"></div>
<div class="t" style="left:222.40px;top:236.46px;width:300px;text-align:center;font-size:6.56px;line-height:7.87px;color:#4a4a4a;">10</div>
<div class="t" style="left:92.20px;top:236.46px;width:300px;text-align:right;transform-origin:100% 50%;font-size:6.56px;line-height:7.87px;color:#4a4a4a;">°C</div>
<div class="t" style="left:305.40px;top:247.12px;transform-origin:0 50%;font-size:5.8px;line-height:6.96px;color:#595959;transform:scaleX(1.11);">Тревоги:</div>
<div style="left:386.40px;top:246.10px;width:9.50px;height:9.00px;background:#ffffff;box-sizing:border-box;border:1px solid #cfd3d2;border-radius:1px;"></div>
<div style="left:401.00px;top:189.00px;width:99.00px;height:11.00px;background:#9cb6b0;"></div>
<div class="t" style="left:300.25px;top:191.36px;width:300px;text-align:center;font-size:6.9px;line-height:8.28px;color:#3e4846;">ШУПВ3</div>
<div style="left:401.00px;top:200.00px;width:100.00px;height:57.00px;background:#f0f0f0;box-sizing:border-box;border:1px solid #b7c7c2;border-bottom-color:#c6d1ce;border-top:none;"></div>
<div class="t" style="left:404.50px;top:203.92px;transform-origin:0 50%;font-size:5.8px;line-height:6.96px;color:#595959;transform:scaleX(1.11);">Т. в приточ. возд.:</div>
<div style="left:458.50px;top:202.80px;width:36.20px;height:8.70px;background:#ffffff;border-radius:2.5px;"></div>
<div class="t" style="left:321.50px;top:204.06px;width:300px;text-align:center;font-size:6.56px;line-height:7.87px;color:#4a4a4a;">10</div>
<div class="t" style="left:191.30px;top:204.06px;width:300px;text-align:right;transform-origin:100% 50%;font-size:6.56px;line-height:7.87px;color:#4a4a4a;">°C</div>
<div class="t" style="left:404.50px;top:214.72px;transform-origin:0 50%;font-size:5.8px;line-height:6.96px;color:#595959;transform:scaleX(1.11);">Т. в помещении:</div>
<div style="left:458.50px;top:213.60px;width:36.20px;height:8.70px;background:#ffffff;border-radius:2.5px;"></div>
<div class="t" style="left:321.50px;top:214.86px;width:300px;text-align:center;font-size:6.56px;line-height:7.87px;color:#4a4a4a;">10</div>
<div class="t" style="left:191.30px;top:214.86px;width:300px;text-align:right;transform-origin:100% 50%;font-size:6.56px;line-height:7.87px;color:#4a4a4a;">°C</div>
<div class="t" style="left:404.50px;top:225.52px;transform-origin:0 50%;font-size:5.8px;line-height:6.96px;color:#595959;transform:scaleX(1.11);">Т. наружная:</div>
<div style="left:458.50px;top:224.40px;width:36.20px;height:8.70px;background:#ffffff;border-radius:2.5px;"></div>
<div class="t" style="left:321.50px;top:225.66px;width:300px;text-align:center;font-size:6.56px;line-height:7.87px;color:#4a4a4a;">10</div>
<div class="t" style="left:191.30px;top:225.66px;width:300px;text-align:right;transform-origin:100% 50%;font-size:6.56px;line-height:7.87px;color:#4a4a4a;">°C</div>
<div class="t" style="left:404.50px;top:236.32px;transform-origin:0 50%;font-size:5.8px;line-height:6.96px;color:#595959;transform:scaleX(1.11);">Т. воды:</div>
<div style="left:458.50px;top:235.20px;width:36.20px;height:8.70px;background:#ffffff;border-radius:2.5px;"></div>
<div class="t" style="left:321.50px;top:236.46px;width:300px;text-align:center;font-size:6.56px;line-height:7.87px;color:#4a4a4a;">10</div>
<div class="t" style="left:191.30px;top:236.46px;width:300px;text-align:right;transform-origin:100% 50%;font-size:6.56px;line-height:7.87px;color:#4a4a4a;">°C</div>
<div class="t" style="left:404.50px;top:247.12px;transform-origin:0 50%;font-size:5.8px;line-height:6.96px;color:#595959;transform:scaleX(1.11);">Тревоги:</div>
<div style="left:485.50px;top:246.10px;width:9.50px;height:9.00px;background:#ffffff;box-sizing:border-box;border:1px solid #cfd3d2;border-radius:1px;"></div>
<div style="left:500.00px;top:189.00px;width:99.00px;height:11.00px;background:#9cb6b0;"></div>
<div class="t" style="left:399.35px;top:191.36px;width:300px;text-align:center;font-size:6.9px;line-height:8.28px;color:#3e4846;">ШУПВ3</div>
<div style="left:500.00px;top:200.00px;width:100.00px;height:57.00px;background:#f0f0f0;box-sizing:border-box;border:1px solid #b7c7c2;border-bottom-color:#c6d1ce;border-top:none;"></div>
<div class="t" style="left:503.60px;top:203.92px;transform-origin:0 50%;font-size:5.8px;line-height:6.96px;color:#595959;transform:scaleX(1.11);">Т. в приточ. возд.:</div>
<div style="left:557.60px;top:202.80px;width:36.20px;height:8.70px;background:#ffffff;border-radius:2.5px;"></div>
<div class="t" style="left:420.60px;top:204.06px;width:300px;text-align:center;font-size:6.56px;line-height:7.87px;color:#4a4a4a;">10</div>
<div class="t" style="left:290.40px;top:204.06px;width:300px;text-align:right;transform-origin:100% 50%;font-size:6.56px;line-height:7.87px;color:#4a4a4a;">°C</div>
<div class="t" style="left:503.60px;top:214.72px;transform-origin:0 50%;font-size:5.8px;line-height:6.96px;color:#595959;transform:scaleX(1.11);">Т. в помещении:</div>
<div style="left:557.60px;top:213.60px;width:36.20px;height:8.70px;background:#ffffff;border-radius:2.5px;"></div>
<div class="t" style="left:420.60px;top:214.86px;width:300px;text-align:center;font-size:6.56px;line-height:7.87px;color:#4a4a4a;">10</div>
<div class="t" style="left:290.40px;top:214.86px;width:300px;text-align:right;transform-origin:100% 50%;font-size:6.56px;line-height:7.87px;color:#4a4a4a;">°C</div>
<div class="t" style="left:503.60px;top:225.52px;transform-origin:0 50%;font-size:5.8px;line-height:6.96px;color:#595959;transform:scaleX(1.11);">Т. наружная:</div>
<div style="left:557.60px;top:224.40px;width:36.20px;height:8.70px;background:#ffffff;border-radius:2.5px;"></div>
<div class="t" style="left:420.60px;top:225.66px;width:300px;text-align:center;font-size:6.56px;line-height:7.87px;color:#4a4a4a;">10</div>
<div class="t" style="left:290.40px;top:225.66px;width:300px;text-align:right;transform-origin:100% 50%;font-size:6.56px;line-height:7.87px;color:#4a4a4a;">°C</div>
<div class="t" style="left:503.60px;top:236.32px;transform-origin:0 50%;font-size:5.8px;line-height:6.96px;color:#595959;transform:scaleX(1.11);">Т. воды:</div>
<div style="left:557.60px;top:235.20px;width:36.20px;height:8.70px;background:#ffffff;border-radius:2.5px;"></div>
<div class="t" style="left:420.60px;top:236.46px;width:300px;text-align:center;font-size:6.56px;line-height:7.87px;color:#4a4a4a;">10</div>
<div class="t" style="left:290.40px;top:236.46px;width:300px;text-align:right;transform-origin:100% 50%;font-size:6.56px;line-height:7.87px;color:#4a4a4a;">°C</div>
<div class="t" style="left:503.60px;top:247.12px;transform-origin:0 50%;font-size:5.8px;line-height:6.96px;color:#595959;transform:scaleX(1.11);">Тревоги:</div>
<div style="left:584.60px;top:246.10px;width:9.50px;height:9.00px;background:#ffffff;box-sizing:border-box;border:1px solid #cfd3d2;border-radius:1px;"></div>
<div style="left:599.00px;top:189.00px;width:99.00px;height:11.00px;background:#9cb6b0;"></div>
<div class="t" style="left:498.45px;top:190.70px;width:300px;text-align:center;font-size:6.5px;line-height:7.80px;color:#3e4846;transform:scaleX(1.05);">1 этаж пом. 1.10</div>
<div style="left:599.00px;top:200.00px;width:100.00px;height:23.00px;background:#f0f0f0;box-sizing:border-box;border:1px solid #b7c7c2;border-bottom-color:#c6d1ce;border-top:none;"></div>
<div class="t" style="left:602.70px;top:202.92px;transform-origin:0 50%;font-size:5.8px;line-height:6.96px;color:#595959;transform:scaleX(1.11);">Протечка:</div>
<div style="left:683.70px;top:201.90px;width:9.50px;height:9.00px;background:#ffffff;box-sizing:border-box;border:1px solid #cfd3d2;border-radius:1px;"></div>
<div class="t" style="left:602.70px;top:213.12px;transform-origin:0 50%;font-size:5.8px;line-height:6.96px;color:#595959;transform:scaleX(1.11);">Температура:</div>
<div style="left:656.70px;top:212.00px;width:36.20px;height:8.70px;background:#ffffff;border-radius:2.5px;"></div>
<div class="t" style="left:519.70px;top:213.26px;width:300px;text-align:center;font-size:6.56px;line-height:7.87px;color:#4a4a4a;">10</div>
<div class="t" style="left:389.50px;top:213.26px;width:300px;text-align:right;transform-origin:100% 50%;font-size:6.56px;line-height:7.87px;color:#4a4a4a;">°C</div>
<div style="left:698.00px;top:189.00px;width:99.00px;height:11.00px;background:#9cb6b0;"></div>
<div class="t" style="left:597.55px;top:190.70px;width:300px;text-align:center;font-size:6.5px;line-height:7.80px;color:#3e4846;transform:scaleX(1.05);">2 этаж пом. 2.8</div>
<div style="left:698.00px;top:200.00px;width:100.00px;height:23.00px;background:#f0f0f0;box-sizing:border-box;border:1px solid #b7c7c2;border-bottom-color:#c6d1ce;border-top:none;"></div>
<div class="t" style="left:701.80px;top:202.92px;transform-origin:0 50%;font-size:5.8px;line-height:6.96px;color:#595959;transform:scaleX(1.11);">Протечка:</div>
<div style="left:782.80px;top:201.90px;width:9.50px;height:8.50px;background:#d92525;"></div>
<div class="t" style="left:701.80px;top:213.12px;transform-origin:0 50%;font-size:5.8px;line-height:6.96px;color:#595959;transform:scaleX(1.11);">Температура:</div>
<div style="left:755.80px;top:212.00px;width:36.20px;height:8.70px;background:#ffffff;border-radius:2.5px;"></div>
<div class="t" style="left:618.80px;top:213.26px;width:300px;text-align:center;font-size:6.56px;line-height:7.87px;color:#4a4a4a;">10</div>
<div class="t" style="left:488.60px;top:213.26px;width:300px;text-align:right;transform-origin:100% 50%;font-size:6.56px;line-height:7.87px;color:#4a4a4a;">°C</div>
<div style="left:797.00px;top:189.00px;width:99.00px;height:11.00px;background:#9cb6b0;"></div>
<div class="t" style="left:696.65px;top:190.70px;width:300px;text-align:center;font-size:6.5px;line-height:7.80px;color:#3e4846;transform:scaleX(1.05);">3 этаж пом. 3.5</div>
<div style="left:797.00px;top:200.00px;width:99.00px;height:23.00px;background:#f0f0f0;box-sizing:border-box;border:1px solid #b7c7c2;border-bottom-color:#c6d1ce;border-top:none;"></div>
<div class="t" style="left:800.90px;top:202.92px;transform-origin:0 50%;font-size:5.8px;line-height:6.96px;color:#595959;transform:scaleX(1.11);">Протечка:</div>
<div style="left:881.90px;top:201.90px;width:9.50px;height:9.00px;background:#ffffff;box-sizing:border-box;border:1px solid #cfd3d2;border-radius:1px;"></div>
<div class="t" style="left:800.90px;top:213.12px;transform-origin:0 50%;font-size:5.8px;line-height:6.96px;color:#595959;transform:scaleX(1.11);">Температура:</div>
<div style="left:854.90px;top:212.00px;width:36.20px;height:8.70px;background:#ffffff;border-radius:2.5px;"></div>
<div class="t" style="left:717.90px;top:213.26px;width:300px;text-align:center;font-size:6.56px;line-height:7.87px;color:#4a4a4a;">10</div>
<div class="t" style="left:587.70px;top:213.26px;width:300px;text-align:right;transform-origin:100% 50%;font-size:6.56px;line-height:7.87px;color:#4a4a4a;">°C</div>
<div style="left:599.00px;top:223.00px;width:99.00px;height:11.00px;background:#9cb6b0;"></div>
<div class="t" style="left:498.45px;top:224.80px;width:300px;text-align:center;font-size:6.5px;line-height:7.80px;color:#3e4846;transform:scaleX(1.05);">1 этаж пом. 1.12</div>
<div style="left:599.00px;top:234.00px;width:100.00px;height:12.00px;background:#f0f0f0;box-sizing:border-box;border:1px solid #b7c7c2;border-bottom-color:#c6d1ce;border-top:none;"></div>
<div class="t" style="left:602.70px;top:236.12px;transform-origin:0 50%;font-size:5.8px;line-height:6.96px;color:#595959;transform:scaleX(1.11);">Протечка:</div>
<div style="left:683.70px;top:235.10px;width:9.50px;height:9.00px;background:#ffffff;box-sizing:border-box;border:1px solid #cfd3d2;border-radius:1px;"></div>
<div style="left:698.00px;top:223.00px;width:99.00px;height:11.00px;background:#9cb6b0;"></div>
<div class="t" style="left:597.55px;top:224.80px;width:300px;text-align:center;font-size:6.5px;line-height:7.80px;color:#3e4846;transform:scaleX(1.05);">2 этаж пом. 2.8/2.15</div>
<div style="left:698.00px;top:234.00px;width:100.00px;height:12.00px;background:#f0f0f0;box-sizing:border-box;border:1px solid #b7c7c2;border-bottom-color:#c6d1ce;border-top:none;"></div>
<div class="t" style="left:701.80px;top:236.12px;transform-origin:0 50%;font-size:5.8px;line-height:6.96px;color:#595959;transform:scaleX(1.11);">Протечка:</div>
<div style="left:782.80px;top:235.10px;width:9.50px;height:9.00px;background:#ffffff;box-sizing:border-box;border:1px solid #cfd3d2;border-radius:1px;"></div>
<div style="left:797.00px;top:223.00px;width:99.00px;height:11.00px;background:#9cb6b0;"></div>
<div class="t" style="left:696.65px;top:224.80px;width:300px;text-align:center;font-size:6.5px;line-height:7.80px;color:#3e4846;transform:scaleX(1.05);">1 этаж пом. 1.16</div>
<div style="left:797.00px;top:234.00px;width:99.00px;height:12.00px;background:#f0f0f0;box-sizing:border-box;border:1px solid #b7c7c2;border-bottom-color:#c6d1ce;border-top:none;"></div>
<div class="t" style="left:800.90px;top:236.12px;transform-origin:0 50%;font-size:5.8px;line-height:6.96px;color:#595959;transform:scaleX(1.11);">Протечка:</div>
<div style="left:881.90px;top:235.10px;width:9.50px;height:9.00px;background:#ffffff;box-sizing:border-box;border:1px solid #cfd3d2;border-radius:1px;"></div>
<div style="left:599.00px;top:246.00px;width:99.00px;height:10.00px;background:#9cb6b0;"></div>
<div class="t" style="left:498.45px;top:247.50px;width:300px;text-align:center;font-size:6.5px;line-height:7.80px;color:#3e4846;transform:scaleX(1.05);">4 этаж пом. 4.7</div>
<div style="left:599.00px;top:256.00px;width:100.00px;height:13.00px;background:#f0f0f0;box-sizing:border-box;border:1px solid #b7c7c2;border-bottom-color:#c6d1ce;border-top:none;"></div>
<div class="t" style="left:602.70px;top:258.82px;transform-origin:0 50%;font-size:5.8px;line-height:6.96px;color:#595959;transform:scaleX(1.11);">Протечка:</div>
<div style="left:683.70px;top:257.80px;width:9.50px;height:9.00px;background:#ffffff;box-sizing:border-box;border:1px solid #cfd3d2;border-radius:1px;"></div>
<div style="left:698.00px;top:246.00px;width:99.00px;height:10.00px;background:#9cb6b0;"></div>
<div class="t" style="left:597.55px;top:247.50px;width:300px;text-align:center;font-size:6.5px;line-height:7.80px;color:#3e4846;transform:scaleX(1.05);">3 этаж пом. 3.10</div>
<div style="left:698.00px;top:256.00px;width:100.00px;height:13.00px;background:#f0f0f0;box-sizing:border-box;border:1px solid #b7c7c2;border-bottom-color:#c6d1ce;border-top:none;"></div>
<div class="t" style="left:701.80px;top:258.82px;transform-origin:0 50%;font-size:5.8px;line-height:6.96px;color:#595959;transform:scaleX(1.11);">Протечка:</div>
<div style="left:782.80px;top:257.80px;width:9.50px;height:9.00px;background:#ffffff;box-sizing:border-box;border:1px solid #cfd3d2;border-radius:1px;"></div>
<div style="left:797.00px;top:246.00px;width:99.00px;height:10.00px;background:#9cb6b0;"></div>
<div class="t" style="left:696.65px;top:247.50px;width:300px;text-align:center;font-size:6.5px;line-height:7.80px;color:#3e4846;transform:scaleX(1.05);">2 этаж пом. 2.14</div>
<div style="left:797.00px;top:256.00px;width:99.00px;height:13.00px;background:#f0f0f0;box-sizing:border-box;border:1px solid #b7c7c2;border-bottom-color:#c6d1ce;border-top:none;"></div>
<div class="t" style="left:800.90px;top:258.82px;transform-origin:0 50%;font-size:5.8px;line-height:6.96px;color:#595959;transform:scaleX(1.11);">Протечка:</div>
<div style="left:881.90px;top:257.80px;width:9.50px;height:9.00px;background:#ffffff;box-sizing:border-box;border:1px solid #cfd3d2;border-radius:1px;"></div>
<div style="left:599.00px;top:269.00px;width:99.00px;height:10.00px;background:#9cb6b0;"></div>
<div class="t" style="left:498.45px;top:270.20px;width:300px;text-align:center;font-size:6.5px;line-height:7.80px;color:#3e4846;transform:scaleX(1.05);">4 этаж пом. 4.3</div>
<div style="left:599.00px;top:279.00px;width:100.00px;height:24.00px;background:#f0f0f0;box-sizing:border-box;border:1px solid #b7c7c2;border-bottom-color:#c6d1ce;border-top:none;"></div>
<div class="t" style="left:602.70px;top:282.42px;transform-origin:0 50%;font-size:5.8px;line-height:6.96px;color:#595959;transform:scaleX(1.11);">Протечка:</div>
<div style="left:683.70px;top:281.40px;width:9.50px;height:9.00px;background:#ffffff;box-sizing:border-box;border:1px solid #cfd3d2;border-radius:1px;"></div>
<div class="t" style="left:602.70px;top:292.62px;transform-origin:0 50%;font-size:5.8px;line-height:6.96px;color:#595959;transform:scaleX(1.11);">Температура:</div>
<div style="left:656.70px;top:291.50px;width:36.20px;height:8.70px;background:#ffffff;border-radius:2.5px;"></div>
<div class="t" style="left:519.70px;top:292.76px;width:300px;text-align:center;font-size:6.56px;line-height:7.87px;color:#4a4a4a;">10</div>
<div class="t" style="left:389.50px;top:292.76px;width:300px;text-align:right;transform-origin:100% 50%;font-size:6.56px;line-height:7.87px;color:#4a4a4a;">°C</div>
<div style="left:698.00px;top:269.00px;width:99.00px;height:10.00px;background:#9cb6b0;"></div>
<div class="t" style="left:597.55px;top:270.20px;width:300px;text-align:center;font-size:6.5px;line-height:7.80px;color:#3e4846;transform:scaleX(1.05);">4 этаж пом. 4.8</div>
<div style="left:698.00px;top:279.00px;width:100.00px;height:12.00px;background:#f0f0f0;box-sizing:border-box;border:1px solid #b7c7c2;border-bottom-color:#c6d1ce;border-top:none;"></div>
<div class="t" style="left:701.80px;top:281.52px;transform-origin:0 50%;font-size:5.8px;line-height:6.96px;color:#595959;transform:scaleX(1.11);">Протечка:</div>
<div style="left:782.80px;top:280.50px;width:9.50px;height:9.00px;background:#ffffff;box-sizing:border-box;border:1px solid #cfd3d2;border-radius:1px;"></div>
<div style="left:797.00px;top:269.00px;width:99.00px;height:10.00px;background:#9cb6b0;"></div>
<div class="t" style="left:696.65px;top:270.20px;width:300px;text-align:center;font-size:6.5px;line-height:7.80px;color:#3e4846;transform:scaleX(1.05);">3 этаж пом. 3.11</div>
<div style="left:797.00px;top:279.00px;width:99.00px;height:12.00px;background:#f0f0f0;box-sizing:border-box;border:1px solid #b7c7c2;border-bottom-color:#c6d1ce;border-top:none;"></div>
<div class="t" style="left:800.90px;top:281.52px;transform-origin:0 50%;font-size:5.8px;line-height:6.96px;color:#595959;transform:scaleX(1.11);">Протечка:</div>
<div style="left:881.90px;top:280.50px;width:9.50px;height:9.00px;background:#ffffff;box-sizing:border-box;border:1px solid #cfd3d2;border-radius:1px;"></div>
<div style="left:103.00px;top:322.00px;width:792.00px;height:9.00px;background:#4f7e72;"></div>
<div class="t" style="left:348.80px;top:322.78px;width:300px;text-align:center;font-size:6.2px;line-height:7.44px;color:#f2f7f5;transform:scaleX(1.23);">Производственный корпус с бытовками (ПКБ)</div>
<div style="left:103.00px;top:331.00px;width:99.00px;height:10.00px;background:#9cb6b0;"></div>
<div class="t" style="left:2.30px;top:333.36px;width:300px;text-align:center;font-size:6.9px;line-height:8.28px;color:#3e4846;">ШУПВ1</div>
<div style="left:103.00px;top:341.00px;width:100.00px;height:48.00px;background:#f0f0f0;box-sizing:border-box;border:1px solid #b7c7c2;border-bottom-color:#c6d1ce;border-top:none;"></div>
<div class="t" style="left:106.60px;top:345.22px;transform-origin:0 50%;font-size:5.8px;line-height:6.96px;color:#595959;transform:scaleX(1.11);">ПВ включен:</div>
<div style="left:187.60px;top:344.20px;width:9.50px;height:8.50px;background:#38ab34;"></div>
<div class="t" style="left:106.60px;top:356.02px;transform-origin:0 50%;font-size:5.8px;line-height:6.96px;color:#595959;transform:scaleX(1.11);">ВВ включен:</div>
<div style="left:187.60px;top:355.00px;width:9.50px;height:9.00px;background:#ffffff;"></div>
<div class="t" style="left:106.60px;top:368.02px;transform-origin:0 50%;font-size:5.8px;line-height:6.96px;color:#595959;transform:scaleX(1.11);">Т. в приточ. возд.:</div>
<div style="left:160.60px;top:366.90px;width:36.20px;height:8.70px;background:#ffffff;border-radius:2.5px;"></div>
<div class="t" style="left:23.60px;top:368.16px;width:300px;text-align:center;font-size:6.56px;line-height:7.87px;color:#4a4a4a;">10</div>
<div class="t" style="left:-106.60px;top:368.16px;width:300px;text-align:right;transform-origin:100% 50%;font-size:6.56px;line-height:7.87px;color:#4a4a4a;">°C</div>
<div class="t" style="left:106.60px;top:378.82px;transform-origin:0 50%;font-size:5.8px;line-height:6.96px;color:#595959;transform:scaleX(1.11);">Аварии:</div>
<div style="left:187.60px;top:377.80px;width:9.50px;height:9.00px;background:#ffffff;box-sizing:border-box;border:1px solid #cfd3d2;border-radius:1px;"></div>
<div style="left:202.00px;top:331.00px;width:99.00px;height:10.00px;background:#9cb6b0;"></div>
<div class="t" style="left:101.30px;top:333.36px;width:300px;text-align:center;font-size:6.9px;line-height:8.28px;color:#3e4846;">ШУПВ2</div>
<div style="left:202.00px;top:341.00px;width:100.00px;height:48.00px;background:#f0f0f0;box-sizing:border-box;border:1px solid #b7c7c2;border-bottom-color:#c6d1ce;border-top:none;"></div>
<div class="t" style="left:205.60px;top:345.22px;transform-origin:0 50%;font-size:5.8px;line-height:6.96px;color:#595959;transform:scaleX(1.11);">ПВ включен:</div>
<div style="left:286.60px;top:344.20px;width:9.50px;height:8.50px;background:#38ab34;"></div>
<div class="t" style="left:205.60px;top:356.02px;transform-origin:0 50%;font-size:5.8px;line-height:6.96px;color:#595959;transform:scaleX(1.11);">ВВ включен:</div>
<div style="left:286.60px;top:355.00px;width:9.50px;height:9.00px;background:#ffffff;box-sizing:border-box;border:1px solid #cfd3d2;border-radius:1px;"></div>
<div class="t" style="left:205.60px;top:368.02px;transform-origin:0 50%;font-size:5.8px;line-height:6.96px;color:#595959;transform:scaleX(1.11);">Т. в приточ. возд.:</div>
<div style="left:259.60px;top:366.90px;width:36.20px;height:8.70px;background:#ffffff;border-radius:2.5px;"></div>
<div class="t" style="left:122.60px;top:368.16px;width:300px;text-align:center;font-size:6.56px;line-height:7.87px;color:#4a4a4a;">10</div>
<div class="t" style="left:-7.60px;top:368.16px;width:300px;text-align:right;transform-origin:100% 50%;font-size:6.56px;line-height:7.87px;color:#4a4a4a;">°C</div>
<div class="t" style="left:205.60px;top:378.82px;transform-origin:0 50%;font-size:5.8px;line-height:6.96px;color:#595959;transform:scaleX(1.11);">Аварии:</div>
<div style="left:286.60px;top:377.80px;width:9.50px;height:9.00px;background:#ffffff;box-sizing:border-box;border:1px solid #cfd3d2;border-radius:1px;"></div>
<div style="left:301.00px;top:331.00px;width:99.00px;height:10.00px;background:#9cb6b0;"></div>
<div class="t" style="left:200.30px;top:333.36px;width:300px;text-align:center;font-size:6.9px;line-height:8.28px;color:#3e4846;">ШУПВ3</div>
<div style="left:301.00px;top:341.00px;width:100.00px;height:48.00px;background:#f0f0f0;box-sizing:border-box;border:1px solid #b7c7c2;border-bottom-color:#c6d1ce;border-top:none;"></div>
<div class="t" style="left:304.60px;top:345.22px;transform-origin:0 50%;font-size:5.8px;line-height:6.96px;color:#595959;transform:scaleX(1.11);">ПВ включен:</div>
<div style="left:385.60px;top:344.20px;width:9.50px;height:8.50px;background:#38ab34;"></div>
<div class="t" style="left:304.60px;top:356.02px;transform-origin:0 50%;font-size:5.8px;line-height:6.96px;color:#595959;transform:scaleX(1.11);">ВВ включен:</div>
<div style="left:385.60px;top:355.00px;width:9.50px;height:9.00px;background:#ffffff;box-sizing:border-box;border:1px solid #cfd3d2;border-radius:1px;"></div>
<div class="t" style="left:304.60px;top:368.02px;transform-origin:0 50%;font-size:5.8px;line-height:6.96px;color:#595959;transform:scaleX(1.11);">Т. в приточ. возд.:</div>
<div style="left:358.60px;top:366.90px;width:36.20px;height:8.70px;background:#ffffff;border-radius:2.5px;"></div>
<div class="t" style="left:221.60px;top:368.16px;width:300px;text-align:center;font-size:6.56px;line-height:7.87px;color:#4a4a4a;">10</div>
<div class="t" style="left:91.40px;top:368.16px;width:300px;text-align:right;transform-origin:100% 50%;font-size:6.56px;line-height:7.87px;color:#4a4a4a;">°C</div>
<div class="t" style="left:304.60px;top:378.82px;transform-origin:0 50%;font-size:5.8px;line-height:6.96px;color:#595959;transform:scaleX(1.11);">Аварии:</div>
<div style="left:385.60px;top:377.80px;width:9.50px;height:9.00px;background:#ffffff;box-sizing:border-box;border:1px solid #cfd3d2;border-radius:1px;"></div>
<div style="left:400.00px;top:331.00px;width:99.00px;height:10.00px;background:#9cb6b0;"></div>
<div class="t" style="left:299.30px;top:333.36px;width:300px;text-align:center;font-size:6.9px;line-height:8.28px;color:#3e4846;">ШУПВ4</div>
<div style="left:400.00px;top:341.00px;width:100.00px;height:48.00px;background:#f0f0f0;box-sizing:border-box;border:1px solid #b7c7c2;border-bottom-color:#c6d1ce;border-top:none;"></div>
<div class="t" style="left:403.60px;top:345.22px;transform-origin:0 50%;font-size:5.8px;line-height:6.96px;color:#595959;transform:scaleX(1.11);">ПВ включен:</div>
<div style="left:484.60px;top:344.20px;width:9.50px;height:8.50px;background:#38ab34;"></div>
<div class="t" style="left:403.60px;top:356.02px;transform-origin:0 50%;font-size:5.8px;line-height:6.96px;color:#595959;transform:scaleX(1.11);">ВВ включен:</div>
<div style="left:484.60px;top:355.00px;width:9.50px;height:9.00px;background:#ffffff;box-sizing:border-box;border:1px solid #cfd3d2;border-radius:1px;"></div>
<div class="t" style="left:403.60px;top:368.02px;transform-origin:0 50%;font-size:5.8px;line-height:6.96px;color:#595959;transform:scaleX(1.11);">Т. в приточ. возд.:</div>
<div style="left:457.60px;top:366.90px;width:36.20px;height:8.70px;background:#ffffff;border-radius:2.5px;"></div>
<div class="t" style="left:320.60px;top:368.16px;width:300px;text-align:center;font-size:6.56px;line-height:7.87px;color:#4a4a4a;">10</div>
<div class="t" style="left:190.40px;top:368.16px;width:300px;text-align:right;transform-origin:100% 50%;font-size:6.56px;line-height:7.87px;color:#4a4a4a;">°C</div>
<div class="t" style="left:403.60px;top:378.82px;transform-origin:0 50%;font-size:5.8px;line-height:6.96px;color:#595959;transform:scaleX(1.11);">Аварии:</div>
<div style="left:484.60px;top:377.80px;width:9.50px;height:9.00px;background:#ffffff;box-sizing:border-box;border:1px solid #cfd3d2;border-radius:1px;"></div>
<div style="left:499.00px;top:331.00px;width:99.00px;height:10.00px;background:#9cb6b0;"></div>
<div class="t" style="left:398.30px;top:333.36px;width:300px;text-align:center;font-size:6.9px;line-height:8.28px;color:#3e4846;">ШУП5</div>
<div style="left:499.00px;top:341.00px;width:100.00px;height:24.00px;background:#f0f0f0;box-sizing:border-box;border:1px solid #b7c7c2;border-bottom-color:#c6d1ce;border-top:none;"></div>
<div class="t" style="left:502.60px;top:344.82px;transform-origin:0 50%;font-size:5.8px;line-height:6.96px;color:#595959;transform:scaleX(1.11);">Т. в приточ. возд.:</div>
<div style="left:556.60px;top:343.70px;width:36.20px;height:8.70px;background:#ffffff;border-radius:2.5px;"></div>
<div class="t" style="left:419.60px;top:344.96px;width:300px;text-align:center;font-size:6.56px;line-height:7.87px;color:#4a4a4a;">10</div>
<div class="t" style="left:289.40px;top:344.96px;width:300px;text-align:right;transform-origin:100% 50%;font-size:6.56px;line-height:7.87px;color:#4a4a4a;">°C</div>
<div class="t" style="left:502.60px;top:355.22px;transform-origin:0 50%;font-size:5.8px;line-height:6.96px;color:#595959;transform:scaleX(1.11);">Тревоги:</div>
<div style="left:583.60px;top:354.20px;width:9.50px;height:9.00px;background:#ffffff;box-sizing:border-box;border:1px solid #cfd3d2;border-radius:1px;"></div>
<div style="left:499.00px;top:365.00px;width:99.00px;height:10.00px;background:#9cb6b0;"></div>
<div class="t" style="left:398.30px;top:367.16px;width:300px;text-align:center;font-size:6.9px;line-height:8.28px;color:#3e4846;">ШУП6</div>
<div style="left:499.00px;top:375.00px;width:100.00px;height:48.00px;background:#f0f0f0;box-sizing:border-box;border:1px solid #b7c7c2;border-bottom-color:#c6d1ce;border-top:none;"></div>
<div class="t" style="left:502.60px;top:378.82px;transform-origin:0 50%;font-size:5.8px;line-height:6.96px;color:#595959;transform:scaleX(1.11);">ПВ включен:</div>
<div style="left:583.60px;top:377.80px;width:9.50px;height:8.50px;background:#38ab34;"></div>
<div class="t" style="left:502.60px;top:390.02px;transform-origin:0 50%;font-size:5.8px;line-height:6.96px;color:#595959;transform:scaleX(1.11);">ВВ включен:</div>
<div style="left:583.60px;top:389.00px;width:9.50px;height:9.00px;background:#ffffff;box-sizing:border-box;border:1px solid #cfd3d2;border-radius:1px;"></div>
<div class="t" style="left:502.60px;top:401.82px;transform-origin:0 50%;font-size:5.8px;line-height:6.96px;color:#595959;transform:scaleX(1.11);">Т. в приточ. возд.:</div>
<div style="left:556.60px;top:400.70px;width:36.20px;height:8.70px;background:#ffffff;border-radius:2.5px;"></div>
<div class="t" style="left:419.60px;top:401.96px;width:300px;text-align:center;font-size:6.56px;line-height:7.87px;color:#4a4a4a;">10</div>
<div class="t" style="left:289.40px;top:401.96px;width:300px;text-align:right;transform-origin:100% 50%;font-size:6.56px;line-height:7.87px;color:#4a4a4a;">°C</div>
<div class="t" style="left:502.60px;top:412.22px;transform-origin:0 50%;font-size:5.8px;line-height:6.96px;color:#595959;transform:scaleX(1.11);">Аварии:</div>
<div style="left:583.60px;top:411.20px;width:9.50px;height:9.00px;background:#ffffff;box-sizing:border-box;border:1px solid #cfd3d2;border-radius:1px;"></div>
<div style="left:598.00px;top:331.00px;width:99.00px;height:11.00px;background:#9cb6b0;"></div>
<div class="t" style="left:497.30px;top:332.95px;width:300px;text-align:center;font-size:6.5px;line-height:7.80px;color:#3e4846;transform:scaleX(1.05);">1 этаж пом. 1.11</div>
<div style="left:598.00px;top:342.00px;width:100.00px;height:23.00px;background:#f0f0f0;box-sizing:border-box;border:1px solid #b7c7c2;border-bottom-color:#c6d1ce;border-top:none;"></div>
<div class="t" style="left:601.60px;top:345.22px;transform-origin:0 50%;font-size:5.8px;line-height:6.96px;color:#595959;transform:scaleX(1.11);">Протечка:</div>
<div style="left:682.60px;top:344.20px;width:9.50px;height:9.00px;background:#ffffff;box-sizing:border-box;border:1px solid #cfd3d2;border-radius:1px;"></div>
<div class="t" style="left:601.60px;top:355.42px;transform-origin:0 50%;font-size:5.8px;line-height:6.96px;color:#595959;transform:scaleX(1.11);">Температура:</div>
<div style="left:655.60px;top:354.30px;width:36.20px;height:8.70px;background:#ffffff;border-radius:2.5px;"></div>
<div class="t" style="left:518.60px;top:355.56px;width:300px;text-align:center;font-size:6.56px;line-height:7.87px;color:#4a4a4a;">10</div>
<div class="t" style="left:388.40px;top:355.56px;width:300px;text-align:right;transform-origin:100% 50%;font-size:6.56px;line-height:7.87px;color:#4a4a4a;">°C</div>
<div style="left:697.00px;top:331.00px;width:99.00px;height:11.00px;background:#9cb6b0;"></div>
<div class="t" style="left:596.30px;top:332.95px;width:300px;text-align:center;font-size:6.5px;line-height:7.80px;color:#3e4846;transform:scaleX(1.05);">2 этаж пом. 2.10</div>
<div style="left:697.00px;top:342.00px;width:100.00px;height:23.00px;background:#f0f0f0;box-sizing:border-box;border:1px solid #b7c7c2;border-bottom-color:#c6d1ce;border-top:none;"></div>
<div class="t" style="left:700.60px;top:345.22px;transform-origin:0 50%;font-size:5.8px;line-height:6.96px;color:#595959;transform:scaleX(1.11);">Протечка:</div>
<div style="left:781.60px;top:344.20px;width:9.50px;height:9.00px;background:#ffffff;box-sizing:border-box;border:1px solid #cfd3d2;border-radius:1px;"></div>
<div class="t" style="left:700.60px;top:355.42px;transform-origin:0 50%;font-size:5.8px;line-height:6.96px;color:#595959;transform:scaleX(1.11);">Температура:</div>
<div style="left:754.60px;top:354.30px;width:36.20px;height:8.70px;background:#ffffff;border-radius:2.5px;"></div>
<div class="t" style="left:617.60px;top:355.56px;width:300px;text-align:center;font-size:6.56px;line-height:7.87px;color:#4a4a4a;">10</div>
<div class="t" style="left:487.40px;top:355.56px;width:300px;text-align:right;transform-origin:100% 50%;font-size:6.56px;line-height:7.87px;color:#4a4a4a;">°C</div>
<div style="left:796.00px;top:331.00px;width:99.00px;height:11.00px;background:#9cb6b0;"></div>
<div class="t" style="left:695.30px;top:332.95px;width:300px;text-align:center;font-size:6.5px;line-height:7.80px;color:#3e4846;transform:scaleX(1.05);">3 этаж пом. 3.10</div>
<div style="left:796.00px;top:342.00px;width:99.00px;height:23.00px;background:#f0f0f0;box-sizing:border-box;border:1px solid #b7c7c2;border-bottom-color:#c6d1ce;border-top:none;"></div>
<div class="t" style="left:799.60px;top:345.22px;transform-origin:0 50%;font-size:5.8px;line-height:6.96px;color:#595959;transform:scaleX(1.11);">Протечка:</div>
<div style="left:880.60px;top:344.20px;width:9.50px;height:9.00px;background:#ffffff;box-sizing:border-box;border:1px solid #cfd3d2;border-radius:1px;"></div>
<div class="t" style="left:799.60px;top:355.42px;transform-origin:0 50%;font-size:5.8px;line-height:6.96px;color:#595959;transform:scaleX(1.11);">Температура:</div>
<div style="left:853.60px;top:354.30px;width:36.20px;height:8.70px;background:#ffffff;border-radius:2.5px;"></div>
<div class="t" style="left:716.60px;top:355.56px;width:300px;text-align:center;font-size:6.56px;line-height:7.87px;color:#4a4a4a;">10</div>
<div class="t" style="left:586.40px;top:355.56px;width:300px;text-align:right;transform-origin:100% 50%;font-size:6.56px;line-height:7.87px;color:#4a4a4a;">°C</div>
<div style="left:598.00px;top:365.00px;width:99.00px;height:11.00px;background:#9cb6b0;"></div>
<div class="t" style="left:497.30px;top:366.65px;width:300px;text-align:center;font-size:6.5px;line-height:7.80px;color:#3e4846;transform:scaleX(1.05);">1 этаж пом. 1.16</div>
<div style="left:598.00px;top:376.00px;width:100.00px;height:12.00px;background:#f0f0f0;box-sizing:border-box;border:1px solid #b7c7c2;border-bottom-color:#c6d1ce;border-top:none;"></div>
<div class="t" style="left:601.60px;top:378.02px;transform-origin:0 50%;font-size:5.8px;line-height:6.96px;color:#595959;transform:scaleX(1.11);">Протечка:</div>
<div style="left:682.60px;top:377.00px;width:9.50px;height:9.00px;background:#ffffff;box-sizing:border-box;border:1px solid #cfd3d2;border-radius:1px;"></div>
<div style="left:697.00px;top:365.00px;width:99.00px;height:11.00px;background:#9cb6b0;"></div>
<div class="t" style="left:596.30px;top:366.65px;width:300px;text-align:center;font-size:6.5px;line-height:7.80px;color:#3e4846;transform:scaleX(1.05);">2 этаж пом. 2.18</div>
<div style="left:697.00px;top:376.00px;width:100.00px;height:12.00px;background:#f0f0f0;box-sizing:border-box;border:1px solid #b7c7c2;border-bottom-color:#c6d1ce;border-top:none;"></div>
<div class="t" style="left:700.60px;top:378.02px;transform-origin:0 50%;font-size:5.8px;line-height:6.96px;color:#595959;transform:scaleX(1.11);">Протечка:</div>
<div style="left:781.60px;top:377.00px;width:9.50px;height:9.00px;background:#ffffff;box-sizing:border-box;border:1px solid #cfd3d2;border-radius:1px;"></div>
<div style="left:796.00px;top:365.00px;width:99.00px;height:11.00px;background:#9cb6b0;"></div>
<div class="t" style="left:695.30px;top:366.65px;width:300px;text-align:center;font-size:6.5px;line-height:7.80px;color:#3e4846;transform:scaleX(1.05);">3 этаж пом. 3.19</div>
<div style="left:796.00px;top:376.00px;width:99.00px;height:12.00px;background:#f0f0f0;box-sizing:border-box;border:1px solid #b7c7c2;border-bottom-color:#c6d1ce;border-top:none;"></div>
<div class="t" style="left:799.60px;top:378.02px;transform-origin:0 50%;font-size:5.8px;line-height:6.96px;color:#595959;transform:scaleX(1.11);">Протечка:</div>
<div style="left:880.60px;top:377.00px;width:9.50px;height:9.00px;background:#ffffff;box-sizing:border-box;border:1px solid #cfd3d2;border-radius:1px;"></div>
<div style="left:598.00px;top:388.00px;width:99.00px;height:10.00px;background:#9cb6b0;"></div>
<div class="t" style="left:497.30px;top:389.25px;width:300px;text-align:center;font-size:6.5px;line-height:7.80px;color:#3e4846;transform:scaleX(1.05);">1 этаж пом. 1.17</div>
<div style="left:598.00px;top:398.00px;width:100.00px;height:12.00px;background:#f0f0f0;box-sizing:border-box;border:1px solid #b7c7c2;border-bottom-color:#c6d1ce;border-top:none;"></div>
<div class="t" style="left:601.60px;top:400.62px;transform-origin:0 50%;font-size:5.8px;line-height:6.96px;color:#595959;transform:scaleX(1.11);">Протечка:</div>
<div style="left:682.60px;top:399.60px;width:9.50px;height:9.00px;background:#ffffff;box-sizing:border-box;border:1px solid #cfd3d2;border-radius:1px;"></div>
<div style="left:697.00px;top:388.00px;width:99.00px;height:10.00px;background:#9cb6b0;"></div>
<div class="t" style="left:596.30px;top:389.25px;width:300px;text-align:center;font-size:6.5px;line-height:7.80px;color:#3e4846;transform:scaleX(1.05);">2 этаж пом. 2.20</div>
<div style="left:697.00px;top:398.00px;width:100.00px;height:12.00px;background:#f0f0f0;box-sizing:border-box;border:1px solid #b7c7c2;border-bottom-color:#c6d1ce;border-top:none;"></div>
<div class="t" style="left:700.60px;top:400.62px;transform-origin:0 50%;font-size:5.8px;line-height:6.96px;color:#595959;transform:scaleX(1.11);">Протечка:</div>
<div style="left:781.60px;top:399.60px;width:9.50px;height:9.00px;background:#ffffff;box-sizing:border-box;border:1px solid #cfd3d2;border-radius:1px;"></div>
<div style="left:796.00px;top:388.00px;width:99.00px;height:10.00px;background:#9cb6b0;"></div>
<div class="t" style="left:695.30px;top:389.25px;width:300px;text-align:center;font-size:6.5px;line-height:7.80px;color:#3e4846;transform:scaleX(1.1250705747810694);">3 этаж пом. 3.20 вход</div>
<div style="left:796.00px;top:398.00px;width:99.00px;height:12.00px;background:#f0f0f0;box-sizing:border-box;border:1px solid #b7c7c2;border-bottom-color:#c6d1ce;border-top:none;"></div>
<div class="t" style="left:799.60px;top:400.62px;transform-origin:0 50%;font-size:5.8px;line-height:6.96px;color:#595959;transform:scaleX(1.11);">Протечка:</div>
<div style="left:880.60px;top:399.60px;width:9.50px;height:9.00px;background:#ffffff;box-sizing:border-box;border:1px solid #cfd3d2;border-radius:1px;"></div>
<div style="left:598.00px;top:410.00px;width:99.00px;height:11.00px;background:#9cb6b0;"></div>
<div class="t" style="left:497.30px;top:411.85px;width:300px;text-align:center;font-size:6.5px;line-height:7.80px;color:#3e4846;transform:scaleX(1.05);">4 этаж пом. 4.22</div>
<div style="left:598.00px;top:421.00px;width:100.00px;height:12.00px;background:#f0f0f0;box-sizing:border-box;border:1px solid #b7c7c2;border-bottom-color:#c6d1ce;border-top:none;"></div>
<div class="t" style="left:601.60px;top:423.22px;transform-origin:0 50%;font-size:5.8px;line-height:6.96px;color:#595959;transform:scaleX(1.11);">Протечка:</div>
<div style="left:682.60px;top:422.20px;width:9.50px;height:9.00px;background:#ffffff;box-sizing:border-box;border:1px solid #cfd3d2;border-radius:1px;"></div>
<div style="left:697.00px;top:410.00px;width:99.00px;height:11.00px;background:#9cb6b0;"></div>
<div class="t" style="left:596.30px;top:411.85px;width:300px;text-align:center;font-size:6.5px;line-height:7.80px;color:#3e4846;transform:scaleX(1.05);">2 этаж пом. 2.21</div>
<div style="left:697.00px;top:421.00px;width:100.00px;height:12.00px;background:#f0f0f0;box-sizing:border-box;border:1px solid #b7c7c2;border-bottom-color:#c6d1ce;border-top:none;"></div>
<div class="t" style="left:700.60px;top:423.22px;transform-origin:0 50%;font-size:5.8px;line-height:6.96px;color:#595959;transform:scaleX(1.11);">Протечка:</div>
<div style="left:781.60px;top:422.20px;width:9.50px;height:9.00px;background:#ffffff;box-sizing:border-box;border:1px solid #cfd3d2;border-radius:1px;"></div>
<div style="left:796.00px;top:410.00px;width:99.00px;height:11.00px;background:#9cb6b0;"></div>
<div class="t" style="left:695.30px;top:411.85px;width:300px;text-align:center;font-size:6.5px;line-height:7.80px;color:#3e4846;transform:scaleX(1.1527320599292348);">3 этаж пом. 3.20 массаж</div>
<div style="left:796.00px;top:421.00px;width:99.00px;height:12.00px;background:#f0f0f0;box-sizing:border-box;border:1px solid #b7c7c2;border-bottom-color:#c6d1ce;border-top:none;"></div>
<div class="t" style="left:799.60px;top:423.22px;transform-origin:0 50%;font-size:5.8px;line-height:6.96px;color:#595959;transform:scaleX(1.11);">Протечка:</div>
<div style="left:880.60px;top:422.20px;width:9.50px;height:9.00px;background:#ffffff;box-sizing:border-box;border:1px solid #cfd3d2;border-radius:1px;"></div>
<div style="left:598.00px;top:433.00px;width:99.00px;height:10.00px;background:#9cb6b0;"></div>
<div class="t" style="left:497.30px;top:434.45px;width:300px;text-align:center;font-size:6.5px;line-height:7.80px;color:#3e4846;transform:scaleX(1.05);">4 этаж пом. 4.14</div>
<div style="left:598.00px;top:443.00px;width:100.00px;height:24.00px;background:#f0f0f0;box-sizing:border-box;border:1px solid #b7c7c2;border-bottom-color:#c6d1ce;border-top:none;"></div>
<div class="t" style="left:601.60px;top:446.72px;transform-origin:0 50%;font-size:5.8px;line-height:6.96px;color:#595959;transform:scaleX(1.11);">Протечка:</div>
<div style="left:682.60px;top:445.70px;width:9.50px;height:9.00px;background:#ffffff;box-sizing:border-box;border:1px solid #cfd3d2;border-radius:1px;"></div>
<div class="t" style="left:601.60px;top:456.92px;transform-origin:0 50%;font-size:5.8px;line-height:6.96px;color:#595959;transform:scaleX(1.11);">Температура:</div>
<div style="left:655.60px;top:455.80px;width:36.20px;height:8.70px;background:#ffffff;border-radius:2.5px;"></div>
<div class="t" style="left:518.60px;top:457.06px;width:300px;text-align:center;font-size:6.56px;line-height:7.87px;color:#4a4a4a;">10</div>
<div class="t" style="left:388.40px;top:457.06px;width:300px;text-align:right;transform-origin:100% 50%;font-size:6.56px;line-height:7.87px;color:#4a4a4a;">°C</div>
<div style="left:697.00px;top:433.00px;width:99.00px;height:10.00px;background:#9cb6b0;"></div>
<div class="t" style="left:596.30px;top:434.45px;width:300px;text-align:center;font-size:6.5px;line-height:7.80px;color:#3e4846;transform:scaleX(1.05);">4 этаж пом. 4.23</div>
<div style="left:697.00px;top:443.00px;width:100.00px;height:12.00px;background:#f0f0f0;box-sizing:border-box;border:1px solid #b7c7c2;border-bottom-color:#c6d1ce;border-top:none;"></div>
<div class="t" style="left:700.60px;top:445.82px;transform-origin:0 50%;font-size:5.8px;line-height:6.96px;color:#595959;transform:scaleX(1.11);">Протечка:</div>
<div style="left:781.60px;top:444.80px;width:9.50px;height:9.00px;background:#ffffff;box-sizing:border-box;border:1px solid #cfd3d2;border-radius:1px;"></div>
<div style="left:796.00px;top:433.00px;width:99.00px;height:10.00px;background:#9cb6b0;"></div>
<div class="t" style="left:695.30px;top:434.45px;width:300px;text-align:center;font-size:6.5px;line-height:7.80px;color:#3e4846;transform:scaleX(1.05);">4 этаж пом. 4.24</div>
<div style="left:796.00px;top:443.00px;width:99.00px;height:12.00px;background:#f0f0f0;box-sizing:border-box;border:1px solid #b7c7c2;border-bottom-color:#c6d1ce;border-top:none;"></div>
<div class="t" style="left:799.60px;top:445.82px;transform-origin:0 50%;font-size:5.8px;line-height:6.96px;color:#595959;transform:scaleX(1.11);">Протечка:</div>
<div style="left:880.60px;top:444.80px;width:9.50px;height:9.00px;background:#ffffff;box-sizing:border-box;border:1px solid #cfd3d2;border-radius:1px;"></div>
<div style="left:103.00px;top:413.00px;width:297.00px;height:10.00px;background:#4f7e72;"></div>
<div class="t" style="left:101.60px;top:414.48px;width:300px;text-align:center;font-size:6.2px;line-height:7.44px;color:#f2f7f5;transform:scaleX(1.23);">АПК</div>
<div style="left:103.00px;top:423.00px;width:99.00px;height:10.00px;background:#9cb6b0;"></div>
<div class="t" style="left:2.60px;top:425.26px;width:300px;text-align:center;font-size:6.9px;line-height:8.28px;color:#3e4846;">ШУПВ4</div>
<div style="left:103.00px;top:433.00px;width:100.00px;height:58.00px;background:#f0f0f0;box-sizing:border-box;border:1px solid #b7c7c2;border-bottom-color:#c6d1ce;border-top:none;"></div>
<div class="t" style="left:107.10px;top:438.02px;transform-origin:0 50%;font-size:5.8px;line-height:6.96px;color:#595959;transform:scaleX(1.11);">Установка включена:</div>
<div style="left:187.90px;top:437.00px;width:9.50px;height:8.50px;background:#38ab34;"></div>
<div class="t" style="left:107.10px;top:447.62px;transform-origin:0 50%;font-size:5.8px;line-height:6.96px;color:#595959;transform:scaleX(1.11);">Т. в приточ. возд.:</div>
<div style="left:160.90px;top:446.50px;width:36.20px;height:8.70px;background:#ffffff;border-radius:2.5px;"></div>
<div class="t" style="left:23.90px;top:447.76px;width:300px;text-align:center;font-size:6.56px;line-height:7.87px;color:#4a4a4a;">10</div>
<div class="t" style="left:-106.30px;top:447.76px;width:300px;text-align:right;transform-origin:100% 50%;font-size:6.56px;line-height:7.87px;color:#4a4a4a;">°C</div>
<div class="t" style="left:107.10px;top:458.92px;transform-origin:0 50%;font-size:5.8px;line-height:6.96px;color:#595959;transform:scaleX(1.11);">Т. наружная:</div>
<div style="left:160.90px;top:457.80px;width:36.20px;height:8.70px;background:#ffffff;border-radius:2.5px;"></div>
<div class="t" style="left:23.90px;top:459.06px;width:300px;text-align:center;font-size:6.56px;line-height:7.87px;color:#4a4a4a;">10</div>
<div class="t" style="left:-106.30px;top:459.06px;width:300px;text-align:right;transform-origin:100% 50%;font-size:6.56px;line-height:7.87px;color:#4a4a4a;">°C</div>
<div class="t" style="left:107.10px;top:470.32px;transform-origin:0 50%;font-size:5.8px;line-height:6.96px;color:#595959;transform:scaleX(1.11);">Т. обратной воды:</div>
<div style="left:160.90px;top:469.20px;width:36.20px;height:8.70px;background:#ffffff;border-radius:2.5px;"></div>
<div class="t" style="left:23.90px;top:470.46px;width:300px;text-align:center;font-size:6.56px;line-height:7.87px;color:#4a4a4a;">10</div>
<div class="t" style="left:-106.30px;top:470.46px;width:300px;text-align:right;transform-origin:100% 50%;font-size:6.56px;line-height:7.87px;color:#4a4a4a;">°C</div>
<div class="t" style="left:111.10px;top:481.22px;transform-origin:0 50%;font-size:5.8px;line-height:6.96px;color:#595959;transform:scaleX(1.11);">Аварии:</div>
<div style="left:187.90px;top:480.20px;width:9.50px;height:9.00px;background:#ffffff;box-sizing:border-box;border:1px solid #cfd3d2;border-radius:1px;"></div>
<div style="left:202.00px;top:423.00px;width:99.00px;height:10.00px;background:#9cb6b0;"></div>
<div class="t" style="left:101.60px;top:424.62px;width:300px;text-align:center;font-size:6.8px;line-height:8.16px;color:#3e4846;transform:scaleX(1.04);">3 этаж пом. 3.11</div>
<div style="left:202.00px;top:433.00px;width:100.00px;height:24.00px;background:#f0f0f0;box-sizing:border-box;border:1px solid #b7c7c2;border-bottom-color:#c6d1ce;border-top:none;"></div>
<div class="t" style="left:206.10px;top:435.02px;transform-origin:0 50%;font-size:5.8px;line-height:6.96px;color:#595959;transform:scaleX(1.11);">Протечка:</div>
<div style="left:286.90px;top:435.30px;width:9.50px;height:9.00px;background:#ffffff;box-sizing:border-box;border:1px solid #cfd3d2;border-radius:1px;"></div>
<div class="t" style="left:205.90px;top:446.12px;transform-origin:0 50%;font-size:5.8px;line-height:6.96px;color:#595959;transform:scaleX(1.11);">Температура:</div>
<div style="left:259.90px;top:445.00px;width:36.20px;height:8.70px;background:#ffffff;border-radius:2.5px;"></div>
<div class="t" style="left:122.90px;top:446.26px;width:300px;text-align:center;font-size:6.56px;line-height:7.87px;color:#4a4a4a;">10</div>
<div class="t" style="left:-7.30px;top:446.26px;width:300px;text-align:right;transform-origin:100% 50%;font-size:6.56px;line-height:7.87px;color:#4a4a4a;">°C</div>
<div style="left:202.00px;top:457.00px;width:99.00px;height:11.00px;background:#9cb6b0;"></div>
<div class="t" style="left:101.60px;top:459.02px;width:300px;text-align:center;font-size:6.8px;line-height:8.16px;color:#3e4846;transform:scaleX(1.04);">3 этаж пом. 3.3</div>
<div style="left:202.00px;top:468.00px;width:100.00px;height:14.00px;background:#f0f0f0;box-sizing:border-box;border:1px solid #b7c7c2;border-bottom-color:#c6d1ce;border-top:none;"></div>
<div class="t" style="left:206.10px;top:469.62px;transform-origin:0 50%;font-size:5.8px;line-height:6.96px;color:#595959;transform:scaleX(1.11);">Протечка:</div>
<div style="left:286.90px;top:469.90px;width:9.50px;height:9.00px;background:#ffffff;box-sizing:border-box;border:1px solid #cfd3d2;border-radius:1px;"></div>
<div style="left:301.00px;top:423.00px;width:99.00px;height:10.00px;background:#9cb6b0;"></div>
<div class="t" style="left:200.60px;top:424.62px;width:300px;text-align:center;font-size:6.8px;line-height:8.16px;color:#3e4846;transform:scaleX(1.04);">3 этаж пом. 3.20</div>
<div style="left:301.00px;top:433.00px;width:100.00px;height:24.00px;background:#f0f0f0;box-sizing:border-box;border:1px solid #b7c7c2;border-bottom-color:#c6d1ce;border-top:none;"></div>
<div class="t" style="left:305.10px;top:435.02px;transform-origin:0 50%;font-size:5.8px;line-height:6.96px;color:#595959;transform:scaleX(1.11);">Протечка:</div>
<div style="left:385.90px;top:435.30px;width:9.50px;height:9.00px;background:#ffffff;box-sizing:border-box;border:1px solid #cfd3d2;border-radius:1px;"></div>
<div class="t" style="left:304.90px;top:446.12px;transform-origin:0 50%;font-size:5.8px;line-height:6.96px;color:#595959;transform:scaleX(1.11);">Температура:</div>
<div style="left:358.90px;top:445.00px;width:36.20px;height:8.70px;background:#ffffff;border-radius:2.5px;"></div>
<div class="t" style="left:221.90px;top:446.26px;width:300px;text-align:center;font-size:6.56px;line-height:7.87px;color:#4a4a4a;">10</div>
<div class="t" style="left:91.70px;top:446.26px;width:300px;text-align:right;transform-origin:100% 50%;font-size:6.56px;line-height:7.87px;color:#4a4a4a;">°C</div>
</body></html>
